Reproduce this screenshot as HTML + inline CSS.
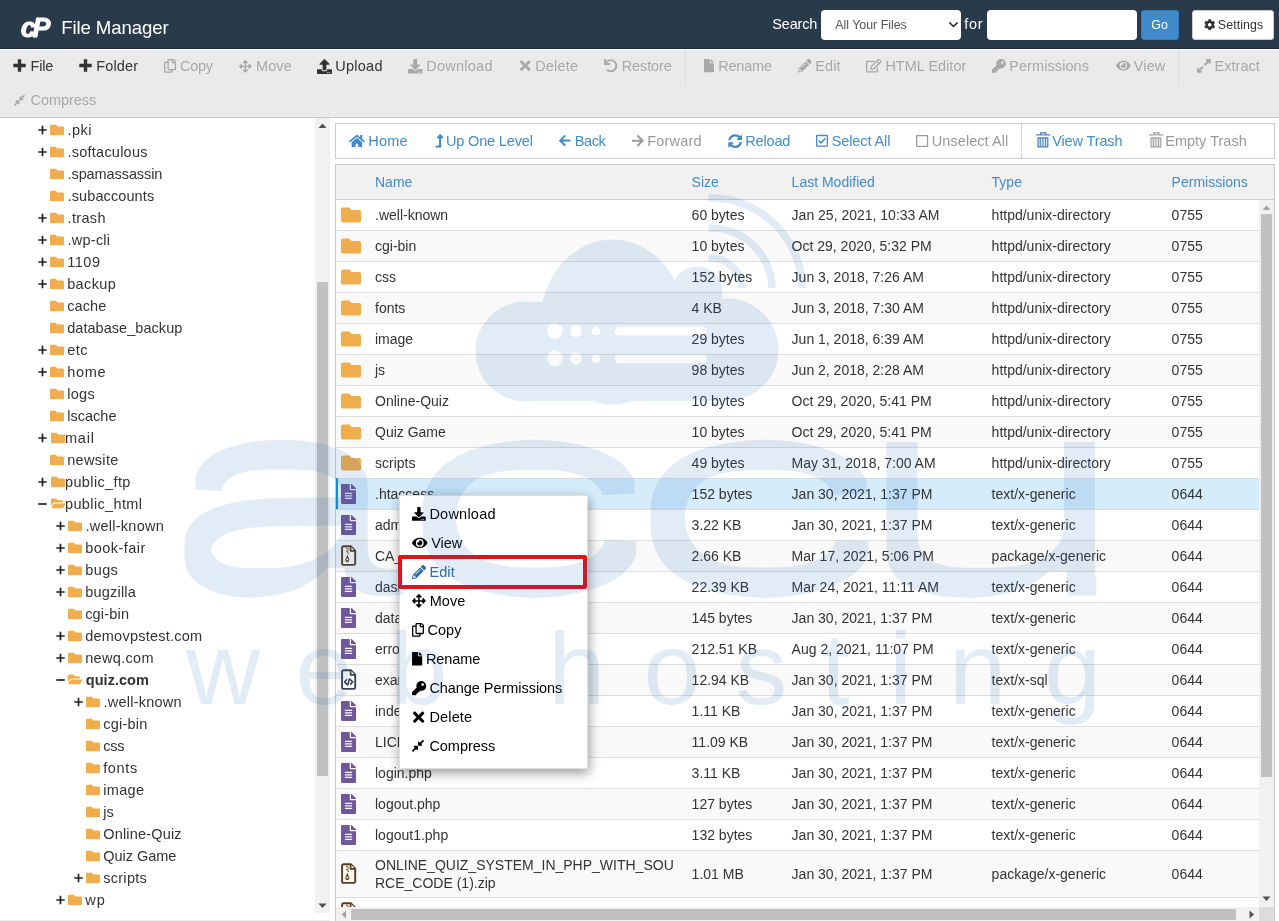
<!DOCTYPE html>
<html lang="en"><head><meta charset="utf-8"><title>cPanel File Manager</title>
<style>html,body{margin:0;padding:0}body{width:1279px;height:921px;position:relative;overflow:hidden;background:#fff;will-change:transform;font-family:"Liberation Sans",sans-serif}svg{display:block;overflow:visible}</style></head>
<body>
<div style="position:absolute;left:0px;top:0px;width:1279px;height:48px;background:#293a4a"></div>
<div style="position:absolute;left:0px;top:48px;width:1279px;height:1px;background:#212d39"></div>
<svg style="position:absolute;left:14px;top:8px" width="46" height="36" viewBox="0 0 46 36"><text x="6.8" y="28.6" font-family="Liberation Sans, sans-serif" font-weight="700" font-style="italic" font-size="27" fill="#fff" stroke="#fff" stroke-width="0.9" stroke-linejoin="round">c<tspan dx="-3.4">P</tspan></text></svg>
<span style="position:absolute;left:61.20px;top:14.56px;font:18.6px/26px 'Liberation Sans', sans-serif;color:#fff;letter-spacing:-0.101px;white-space:nowrap;">File Manager</span>
<span style="position:absolute;left:772.20px;top:13.98px;font:14.5px/20px 'Liberation Sans', sans-serif;color:#fff;letter-spacing:-0.142px;white-space:nowrap;">Search</span>
<div style="position:absolute;left:821px;top:10px;width:140px;height:30px;background:#fff;border-radius:4px"></div>
<span style="position:absolute;left:835.20px;top:15.20px;font:12.4px/20px 'Liberation Sans', sans-serif;color:#555;letter-spacing:-0.003px;white-space:nowrap;">All Your Files</span>
<svg style="position:absolute;left:947.5px;top:21px" width="11" height="8" viewBox="0 0 11 8"><path d="M1.8 1.9 L5.5 5.5 L9.2 1.9" fill="none" stroke="#333" stroke-width="1.7" stroke-linecap="round" stroke-linejoin="round"/></svg>
<span style="position:absolute;left:964.20px;top:13.98px;font:14.5px/20px 'Liberation Sans', sans-serif;color:#fff;letter-spacing:0.726px;white-space:nowrap;">for</span>
<div style="position:absolute;left:987px;top:10px;width:150px;height:30px;background:#fff;border-radius:4px"></div>
<div style="position:absolute;left:1141px;top:10px;width:38px;height:30px;background:#428bca;border-radius:3px;box-sizing:border-box;border:1px solid #357ebd"></div>
<span style="position:absolute;left:1151.20px;top:15.20px;font:12.4px/20px 'Liberation Sans', sans-serif;color:#fff;letter-spacing:0.284px;white-space:nowrap;">Go</span>
<div style="position:absolute;left:1192px;top:10px;width:82px;height:30px;background:#fff;border-radius:3px;box-sizing:border-box;border:1px solid #ccc"></div>
<svg style="position:absolute;left:1204.00px;top:19.30px" width="11.40" height="11.40" viewBox="0 0 512 512"><path d="M487.400 315.700l-42.600-24.600c4.300-23.200 4.300-47 0-70.200l42.600-24.600c4.900-2.800 7.100-8.600 5.500-14-11.100-35.600-30-67.800-54.700-94.600-3.800-4.100-10-5.100-14.800-2.300L380.800 110c-17.900-15.400-38.500-27.300-60.800-35.100V25.800c0-5.600-3.900-10.500-9.400-11.700-36.700-8.200-74.300-7.800-109.200 0-5.500 1.200-9.400 6.100-9.400 11.700V75c-22.200 7.900-42.800 19.800-60.800 35.100L88.700 85.500c-4.900-2.800-11-1.900-14.800 2.300-24.700 26.700-43.600 58.900-54.700 94.600-1.700 5.400.6 11.200 5.500 14L67.300 221c-4.300 23.200-4.300 47 0 70.200l-42.600 24.600c-4.900 2.800-7.100 8.600-5.500 14 11.100 35.600 30 67.800 54.700 94.600 3.800 4.100 10 5.100 14.800 2.300l42.600-24.600c17.900 15.400 38.500 27.300 60.800 35.100v49.200c0 5.600 3.900 10.500 9.400 11.700 36.700 8.200 74.300 7.800 109.200 0 5.500-1.200 9.400-6.100 9.400-11.700v-49.200c22.200-7.900 42.800-19.800 60.800-35.100l42.600 24.600c4.900 2.800 11 1.900 14.800-2.300 24.700-26.700 43.600-58.900 54.700-94.600 1.500-5.500-.7-11.300-5.600-14.100zM256 336c-44.100 0-80-35.900-80-80s35.900-80 80-80 80 35.900 80 80-35.900 80-80 80z" fill="#333"/></svg>
<span style="position:absolute;left:1217.80px;top:15.20px;font:12.4px/20px 'Liberation Sans', sans-serif;color:#333;letter-spacing:0.090px;white-space:nowrap;">Settings</span>
<div style="position:absolute;left:0px;top:49px;width:1279px;height:68px;background:#eaeaea"></div>
<div style="position:absolute;left:0px;top:49px;width:1279px;height:1px;background:#f4f7fb"></div>
<div style="position:absolute;left:0px;top:50px;width:1279px;height:1px;background:#edeff2"></div>
<div style="position:absolute;left:0px;top:117px;width:1279px;height:1px;background:#c9c9c9"></div>
<div style="position:absolute;left:685px;top:50px;width:1px;height:34px;background:#dcdcdc"></div>
<div style="position:absolute;left:1178px;top:50px;width:1px;height:34px;background:#dcdcdc"></div>
<svg style="position:absolute;left:13px;top:59px" width="13" height="13" viewBox="0 0 13 13"><path d="M4.8 0.3h3.4v4.500h4.500v3.400h-4.500v4.500h-3.400v-4.500h-4.500v-3.400h4.500z" fill="#333"/></svg>
<span style="position:absolute;left:30.45px;top:55.98px;font:14.5px/20px 'Liberation Sans', sans-serif;color:#333;letter-spacing:-0.131px;white-space:nowrap;">File</span>
<svg style="position:absolute;left:79px;top:59px" width="13" height="13" viewBox="0 0 13 13"><path d="M4.8 0.3h3.4v4.500h4.500v3.400h-4.500v4.500h-3.400v-4.500h-4.500v-3.400h4.500z" fill="#333"/></svg>
<span style="position:absolute;left:96.20px;top:55.98px;font:14.5px/20px 'Liberation Sans', sans-serif;color:#333;letter-spacing:0.165px;white-space:nowrap;">Folder</span>
<svg style="position:absolute;left:163.80px;top:59.09px" width="12.10" height="13.83" viewBox="0 0 448 512"><path d="M433.941 65.941l-51.882-51.882A48 48 0 0 0 348.118 0H176c-26.510 0-48 21.490-48 48v48H48c-26.510 0-48 21.490-48 48v320c0 26.510 21.490 48 48 48h224c26.510 0 48-21.490 48-48v-48h80c26.510 0 48-21.490 48-48V99.882a48 48 0 0 0-14.059-33.941zM266 464H54a6 6 0 0 1-6-6V150a6 6 0 0 1 6-6h74v224c0 26.510 21.490 48 48 48h96v42a6 6 0 0 1-6 6zm128-96H182a6 6 0 0 1-6-6V54a6 6 0 0 1 6-6h106v88c0 13.255 10.745 24 24 24h88v202a6 6 0 0 1-6 6zm6-256h-64V48h9.632c1.591 0 3.117.632 4.243 1.757l48.368 48.368a6 6 0 0 1 1.757 4.243V112z" fill="#a8a8a8"/></svg>
<span style="position:absolute;left:180.00px;top:55.98px;font:14.5px/20px 'Liberation Sans', sans-serif;color:#a8a8a8;letter-spacing:-0.265px;white-space:nowrap;">Copy</span>
<svg style="position:absolute;left:239.00px;top:59.65px" width="12.70" height="12.70" viewBox="0 0 512 512"><path d="M352.201 425.775l-79.196 79.196c-9.373 9.373-24.568 9.373-33.941 0l-79.196-79.196c-15.119-15.119-4.411-40.971 16.971-40.970h51.162L228 284H127.196v51.162c0 21.382-25.851 32.090-40.971 16.971L7.029 272.937c-9.373-9.373-9.373-24.569 0-33.941L86.225 159.800c15.119-15.119 40.971-4.411 40.971 16.971V228H228V127.196h-51.230c-21.382 0-32.090-25.851-16.971-40.971l79.196-79.196c9.373-9.373 24.568-9.373 33.941 0l79.196 79.196c15.119 15.119 4.411 40.971-16.971 40.971h-51.162V228h100.804v-51.162c0-21.382 25.851-32.090 40.970-16.971l79.196 79.196c9.373 9.373 9.373 24.569 0 33.941L425.773 352.200c-15.119 15.119-40.971 4.411-40.970-16.971V284H284v100.804h51.230c21.382 0 32.090 25.851 16.971 40.971z" fill="#a8a8a8"/></svg>
<span style="position:absolute;left:256.00px;top:55.98px;font:14.5px/20px 'Liberation Sans', sans-serif;color:#a8a8a8;letter-spacing:0.083px;white-space:nowrap;">Move</span>
<svg style="position:absolute;left:317.00px;top:58.50px" width="15.00" height="15.00" viewBox="0 0 512 512"><path d="M296 384h-80c-13.300 0-24-10.700-24-24V192h-87.700c-17.800 0-26.700-21.500-14.100-34.100L242.300 5.700c7.500-7.500 19.800-7.500 27.300 0l152.200 152.200c12.600 12.600 3.700 34.100-14.100 34.100H320v168c0 13.300-10.700 24-24 24zm216-8v112c0 13.300-10.700 24-24 24H24c-13.300 0-24-10.700-24-24V376c0-13.300 10.700-24 24-24h136v8c0 30.900 25.100 56 56 56h80c30.900 0 56-25.100 56-56v-8h136c13.300 0 24 10.700 24 24zm-124 88c0-11-9-20-20-20s-20 9-20 20 9 20 20 20 20-9 20-20zm64 0c0-11-9-20-20-20s-20 9-20 20 9 20 20 20 20-9 20-20z" fill="#333"/></svg>
<span style="position:absolute;left:335.20px;top:55.98px;font:14.5px/20px 'Liberation Sans', sans-serif;color:#333;letter-spacing:0.274px;white-space:nowrap;">Upload</span>
<svg style="position:absolute;left:408.00px;top:58.75px" width="14.50" height="14.50" viewBox="0 0 512 512"><path d="M216 0h80c13.300 0 24 10.700 24 24v168h87.700c17.800 0 26.700 21.500 14.100 34.100L269.700 378.300c-7.500 7.500-19.800 7.500-27.300 0L90.100 226.100c-12.600-12.600-3.700-34.100 14.100-34.100H192V24c0-13.300 10.700-24 24-24zm296 376v112c0 13.300-10.700 24-24 24H24c-13.300 0-24-10.700-24-24V376c0-13.300 10.700-24 24-24h146.700l49 49c20.100 20.100 52.500 20.100 72.600 0l49-49H488c13.300 0 24 10.700 24 24zm-124 88c0-11-9-20-20-20s-20 9-20 20 9 20 20 20 20-9 20-20zm64 0c0-11-9-20-20-20s-20 9-20 20 9 20 20 20 20-9 20-20z" fill="#a8a8a8"/></svg>
<span style="position:absolute;left:426.20px;top:55.98px;font:14.5px/20px 'Liberation Sans', sans-serif;color:#a8a8a8;letter-spacing:0.262px;white-space:nowrap;">Download</span>
<svg style="position:absolute;left:520.00px;top:58.36px" width="10.50" height="15.27" viewBox="0 0 352 512"><path d="M242.72 256l100.070-100.070c12.280-12.280 12.280-32.190 0-44.480l-22.240-22.240c-12.280-12.280-32.190-12.280-44.480 0L176 189.280 75.930 89.210c-12.280-12.280-32.190-12.280-44.480 0L9.210 111.450c-12.280 12.280-12.280 32.190 0 44.480L109.280 256 9.210 356.070c-12.280 12.280-12.280 32.190 0 44.480l22.240 22.240c12.280 12.280 32.200 12.280 44.480 0L176 322.720l100.070 100.070c12.280 12.280 32.200 12.280 44.480 0l22.240-22.240c12.280-12.280 12.280-32.190 0-44.480L242.720 256z" fill="#a8a8a8"/></svg>
<span style="position:absolute;left:535.20px;top:55.98px;font:14.5px/20px 'Liberation Sans', sans-serif;color:#a8a8a8;letter-spacing:0.196px;white-space:nowrap;">Delete</span>
<svg style="position:absolute;left:604.00px;top:59.25px" width="13.50" height="13.50" viewBox="0 0 512 512"><path d="M212.333 224.333H12c-6.627 0-12-5.373-12-12V12C0 5.373 5.373 0 12 0h48c6.627 0 12 5.373 12 12v78.112C117.773 39.279 184.260 7.470 258.175 8.007c136.906.994 246.448 111.623 246.157 248.532C504.041 393.258 393.120 504 256.333 504c-64.089 0-122.496-24.313-166.510-64.215-5.099-4.622-5.334-12.554-.467-17.420l33.967-33.967c4.474-4.474 11.662-4.717 16.401-.525C170.760 415.336 211.580 432 256.333 432c97.268 0 176-78.716 176-176 0-97.267-78.716-176-176-176-58.496 0-110.280 28.476-142.274 72.333h98.274c6.627 0 12 5.373 12 12v48c0 6.627-5.373 12-12 12z" fill="#a8a8a8"/></svg>
<span style="position:absolute;left:621.70px;top:55.98px;font:14.5px/20px 'Liberation Sans', sans-serif;color:#a8a8a8;letter-spacing:-0.097px;white-space:nowrap;">Restore</span>
<svg style="position:absolute;left:704.00px;top:59.33px" width="10.00" height="13.33" viewBox="0 0 384 512"><path d="M224 136V0H24C10.700 0 0 10.700 0 24v464c0 13.300 10.700 24 24 24h336c13.300 0 24-10.700 24-24V160H248c-13.200 0-24-10.800-24-24zm160-14.100v6.100H256V0h6.100c6.400 0 12.500 2.500 17 7l97.900 98c4.500 4.500 7 10.600 7 16.900z" fill="#a8a8a8"/></svg>
<span style="position:absolute;left:718.20px;top:55.98px;font:14.5px/20px 'Liberation Sans', sans-serif;color:#a8a8a8;letter-spacing:-0.202px;white-space:nowrap;">Rename</span>
<svg style="position:absolute;left:797.50px;top:59.25px" width="13.50" height="13.50" viewBox="0 0 512 512"><path d="M497.900 142.100l-46.100 46.100c-4.700 4.700-12.300 4.700-17 0l-111-111c-4.700-4.700-4.700-12.300 0-17l46.100-46.100c18.700-18.700 49.100-18.700 67.900 0l60.100 60.100c18.800 18.700 18.800 49.100 0 67.900zM284.200 99.800L21.600 362.400.4 483.900c-2.900 16.400 11.400 30.600 27.800 27.800l121.500-21.300 262.600-262.600c4.700-4.700 4.700-12.300 0-17l-111-111c-4.800-4.700-12.400-4.700-17.100 0zM124.100 339.900c-5.500-5.500-5.500-14.300 0-19.800l154-154c5.500-5.500 14.300-5.500 19.800 0s5.500 14.300 0 19.800l-154 154c-5.500 5.500-14.300 5.500-19.800 0zM88 424h48v36.300l-64.500 11.300-31.100-31.100L51.700 376H88v48z" fill="#a8a8a8"/></svg>
<span style="position:absolute;left:815.20px;top:55.98px;font:14.5px/20px 'Liberation Sans', sans-serif;color:#a8a8a8;letter-spacing:0.150px;white-space:nowrap;">Edit</span>
<svg style="position:absolute;left:866.00px;top:59.20px" width="15.30" height="13.60" viewBox="0 0 576 512"><path d="M402.300 344.900l32-32c5-5 13.700-1.500 13.700 5.700V464c0 26.500-21.500 48-48 48H48c-26.500 0-48-21.500-48-48V112c0-26.500 21.500-48 48-48h273.500c7.100 0 10.700 8.600 5.700 13.700l-32 32c-1.500 1.500-3.500 2.300-5.700 2.300H48v352h352V350.500c0-2.100.8-4.100 2.300-5.600zm156.600-201.800L296.300 405.700l-90.400 10c-26.200 2.900-48.500-19.200-45.600-45.600l10-90.400L432.900 17.100c22.900-22.900 59.900-22.900 82.700 0l43.200 43.200c22.900 22.900 22.900 60 .1 82.800zM460.100 174L402 115.900 216.200 301.800l-7.300 65.300 65.300-7.300L460.100 174zm64.800-79.700l-43.200-43.200c-4.100-4.100-10.800-4.100-14.800 0L436 82l58.100 58.100 30.900-30.900c4-4.200 4-10.800-.1-14.900z" fill="#a8a8a8"/></svg>
<span style="position:absolute;left:885.40px;top:55.98px;font:14.5px/20px 'Liberation Sans', sans-serif;color:#a8a8a8;letter-spacing:0.005px;white-space:nowrap;">HTML Editor</span>
<svg style="position:absolute;left:992.00px;top:59.10px" width="13.80" height="13.80" viewBox="0 0 512 512"><path d="M512 176.001C512 273.203 433.202 352 336 352c-11.220 0-22.190-1.062-32.827-3.069l-24.012 27.014A23.999 23.999 0 0 1 261.223 384H224v40c0 13.255-10.745 24-24 24h-40v40c0 13.255-10.745 24-24 24H24c-13.255 0-24-10.745-24-24v-78.059c0-6.365 2.529-12.470 7.029-16.971l161.802-161.802C163.108 213.814 160 195.271 160 176 160 78.798 238.797.001 335.999 0 433.488-.001 512 78.511 512 176.001zM336 128c0 26.510 21.490 48 48 48s48-21.490 48-48-21.490-48-48-48-48 21.490-48 48z" fill="#a8a8a8"/></svg>
<span style="position:absolute;left:1009.20px;top:55.98px;font:14.5px/20px 'Liberation Sans', sans-serif;color:#a8a8a8;letter-spacing:0.085px;white-space:nowrap;">Permissions</span>
<svg style="position:absolute;left:1115.50px;top:59.42px" width="14.80" height="13.16" viewBox="0 0 576 512"><path d="M572.520 241.400C518.290 135.590 410.930 64 288 64S57.680 135.640 3.480 241.410a32.350 32.350 0 0 0 0 29.190C57.710 376.410 165.070 448 288 448s230.320-71.640 284.520-177.410a32.350 32.350 0 0 0 0-29.190zM288 400a144 144 0 1 1 144-144 143.930 143.930 0 0 1-144 144zm0-240a95.310 95.310 0 0 0-25.310 3.790 47.850 47.850 0 0 1-66.900 66.900A95.780 95.780 0 1 0 288 160z" fill="#a8a8a8"/></svg>
<span style="position:absolute;left:1133.70px;top:55.98px;font:14.5px/20px 'Liberation Sans', sans-serif;color:#a8a8a8;letter-spacing:0.157px;white-space:nowrap;">View</span>
<svg style="position:absolute;left:1196.80px;top:58.17px" width="13.70" height="15.66" viewBox="0 0 448 512"><path d="M212.686 315.314L120 408l32.922 31.029c15.120 15.120 4.412 40.971-16.970 40.971h-112C10.697 480 0 469.255 0 456V344c0-21.382 25.803-32.090 40.922-16.971L72 360l92.686-92.686c6.248-6.248 16.379-6.248 22.627 0l25.373 25.373c6.249 6.248 6.249 16.378 0 22.627zm22.628-118.628L328 104l-32.922-31.029C279.958 57.851 290.666 32 312.048 32h112C437.303 32 448 42.745 448 56v112c0 21.382-25.803 32.090-40.922 16.971L376 152l-92.686 92.686c-6.248 6.248-16.379 6.248-22.627 0l-25.373-25.373c-6.249-6.248-6.249-16.378 0-22.627z" fill="#a8a8a8"/></svg>
<span style="position:absolute;left:1214.60px;top:55.98px;font:14.5px/20px 'Liberation Sans', sans-serif;color:#a8a8a8;letter-spacing:0.011px;white-space:nowrap;">Extract</span>
<svg style="position:absolute;left:13.50px;top:93.71px" width="11.00" height="12.57" viewBox="0 0 448 512"><path d="M4.686 427.314L104 328l-32.922-31.029C55.958 281.851 66.666 256 88.048 256h112C213.303 256 224 266.745 224 280v112c0 21.382-25.803 32.090-40.922 16.971L152 376l-99.314 99.314c-6.248 6.248-16.379 6.248-22.627 0L4.686 449.941c-6.248-6.248-6.248-16.379 0-22.627zM443.314 84.686L344 184l32.922 31.029c15.120 15.120 4.412 40.971-16.970 40.971h-112C234.697 256 224 245.255 224 232V120c0-21.382 25.803-32.090 40.922-16.971L296 136l99.314-99.314c6.248-6.248 16.379-6.248 22.627 0l25.373 25.373c6.248 6.248 6.248 16.379 0 22.627z" fill="#a8a8a8"/></svg>
<span style="position:absolute;left:30.45px;top:89.98px;font:14.5px/20px 'Liberation Sans', sans-serif;color:#a8a8a8;letter-spacing:-0.029px;white-space:nowrap;">Compress</span>
<div style="position:absolute;left:315px;top:118px;width:15px;height:795px;background:#f1f1f1"></div>
<div style="position:absolute;left:317px;top:282px;width:11px;height:494px;background:#c1c1c1"></div>
<svg style="position:absolute;left:315px;top:118px" width="15" height="15" viewBox="0 0 15 15"><path d="M3.5 10 L7.5 5.5 L11.5 10z" fill="#505050"/></svg>
<svg style="position:absolute;left:315px;top:898px" width="15" height="15" viewBox="0 0 15 15"><path d="M3.5 5.5 L7.5 10 L11.5 5.5z" fill="#505050"/></svg>
<svg style="position:absolute;left:38px;top:125px" width="9" height="10" viewBox="0 0 9 10"><path d="M0.3 5h8.4M4.5 0.8v8.4" stroke="#222" stroke-width="1.7" fill="none"/></svg>
<svg style="position:absolute;left:50.00px;top:122.70px" width="14.00" height="14.00" viewBox="0 0 512 512"><path d="M464 128H272l-64-64H48C21.490 64 0 85.490 0 112v288c0 26.510 21.490 48 48 48h416c26.510 0 48-21.490 48-48V176c0-26.510-21.490-48-48-48z" fill="#f0ad4e"/></svg>
<span style="position:absolute;left:67.55px;top:118.98px;font:14.5px/22px 'Liberation Sans', sans-serif;color:#333;letter-spacing:0.468px;white-space:nowrap;">.pki</span>
<svg style="position:absolute;left:38px;top:147px" width="9" height="10" viewBox="0 0 9 10"><path d="M0.3 5h8.4M4.5 0.8v8.4" stroke="#222" stroke-width="1.7" fill="none"/></svg>
<svg style="position:absolute;left:50.00px;top:144.70px" width="14.00" height="14.00" viewBox="0 0 512 512"><path d="M464 128H272l-64-64H48C21.490 64 0 85.490 0 112v288c0 26.510 21.490 48 48 48h416c26.510 0 48-21.490 48-48V176c0-26.510-21.490-48-48-48z" fill="#f0ad4e"/></svg>
<span style="position:absolute;left:67.55px;top:140.98px;font:14.5px/22px 'Liberation Sans', sans-serif;color:#333;letter-spacing:0.230px;white-space:nowrap;">.softaculous</span>
<svg style="position:absolute;left:50.00px;top:166.70px" width="14.00" height="14.00" viewBox="0 0 512 512"><path d="M464 128H272l-64-64H48C21.490 64 0 85.490 0 112v288c0 26.510 21.490 48 48 48h416c26.510 0 48-21.490 48-48V176c0-26.510-21.490-48-48-48z" fill="#f0ad4e"/></svg>
<span style="position:absolute;left:67.55px;top:162.98px;font:14.5px/22px 'Liberation Sans', sans-serif;color:#333;letter-spacing:-0.089px;white-space:nowrap;">.spamassassin</span>
<svg style="position:absolute;left:50.00px;top:188.70px" width="14.00" height="14.00" viewBox="0 0 512 512"><path d="M464 128H272l-64-64H48C21.490 64 0 85.490 0 112v288c0 26.510 21.490 48 48 48h416c26.510 0 48-21.490 48-48V176c0-26.510-21.490-48-48-48z" fill="#f0ad4e"/></svg>
<span style="position:absolute;left:67.55px;top:184.98px;font:14.5px/22px 'Liberation Sans', sans-serif;color:#333;letter-spacing:0.108px;white-space:nowrap;">.subaccounts</span>
<svg style="position:absolute;left:38px;top:213px" width="9" height="10" viewBox="0 0 9 10"><path d="M0.3 5h8.4M4.5 0.8v8.4" stroke="#222" stroke-width="1.7" fill="none"/></svg>
<svg style="position:absolute;left:50.00px;top:210.70px" width="14.00" height="14.00" viewBox="0 0 512 512"><path d="M464 128H272l-64-64H48C21.490 64 0 85.490 0 112v288c0 26.510 21.490 48 48 48h416c26.510 0 48-21.490 48-48V176c0-26.510-21.490-48-48-48z" fill="#f0ad4e"/></svg>
<span style="position:absolute;left:67.55px;top:206.98px;font:14.5px/22px 'Liberation Sans', sans-serif;color:#333;letter-spacing:0.331px;white-space:nowrap;">.trash</span>
<svg style="position:absolute;left:38px;top:235px" width="9" height="10" viewBox="0 0 9 10"><path d="M0.3 5h8.4M4.5 0.8v8.4" stroke="#222" stroke-width="1.7" fill="none"/></svg>
<svg style="position:absolute;left:50.00px;top:232.70px" width="14.00" height="14.00" viewBox="0 0 512 512"><path d="M464 128H272l-64-64H48C21.490 64 0 85.490 0 112v288c0 26.510 21.490 48 48 48h416c26.510 0 48-21.490 48-48V176c0-26.510-21.490-48-48-48z" fill="#f0ad4e"/></svg>
<span style="position:absolute;left:67.55px;top:228.98px;font:14.5px/22px 'Liberation Sans', sans-serif;color:#333;letter-spacing:0.237px;white-space:nowrap;">.wp-cli</span>
<svg style="position:absolute;left:38px;top:257px" width="9" height="10" viewBox="0 0 9 10"><path d="M0.3 5h8.4M4.5 0.8v8.4" stroke="#222" stroke-width="1.7" fill="none"/></svg>
<svg style="position:absolute;left:50.00px;top:254.70px" width="14.00" height="14.00" viewBox="0 0 512 512"><path d="M464 128H272l-64-64H48C21.490 64 0 85.490 0 112v288c0 26.510 21.490 48 48 48h416c26.510 0 48-21.490 48-48V176c0-26.510-21.490-48-48-48z" fill="#f0ad4e"/></svg>
<span style="position:absolute;left:67.20px;top:250.98px;font:14.5px/22px 'Liberation Sans', sans-serif;color:#333;letter-spacing:0.528px;white-space:nowrap;">1109</span>
<svg style="position:absolute;left:38px;top:279px" width="9" height="10" viewBox="0 0 9 10"><path d="M0.3 5h8.4M4.5 0.8v8.4" stroke="#222" stroke-width="1.7" fill="none"/></svg>
<svg style="position:absolute;left:50.00px;top:276.70px" width="14.00" height="14.00" viewBox="0 0 512 512"><path d="M464 128H272l-64-64H48C21.490 64 0 85.490 0 112v288c0 26.510 21.490 48 48 48h416c26.510 0 48-21.490 48-48V176c0-26.510-21.490-48-48-48z" fill="#f0ad4e"/></svg>
<span style="position:absolute;left:67.20px;top:272.98px;font:14.5px/22px 'Liberation Sans', sans-serif;color:#333;letter-spacing:0.356px;white-space:nowrap;">backup</span>
<svg style="position:absolute;left:50.00px;top:298.70px" width="14.00" height="14.00" viewBox="0 0 512 512"><path d="M464 128H272l-64-64H48C21.490 64 0 85.490 0 112v288c0 26.510 21.490 48 48 48h416c26.510 0 48-21.490 48-48V176c0-26.510-21.490-48-48-48z" fill="#f0ad4e"/></svg>
<span style="position:absolute;left:67.20px;top:294.98px;font:14.5px/22px 'Liberation Sans', sans-serif;color:#333;letter-spacing:0.079px;white-space:nowrap;">cache</span>
<svg style="position:absolute;left:50.00px;top:320.70px" width="14.00" height="14.00" viewBox="0 0 512 512"><path d="M464 128H272l-64-64H48C21.490 64 0 85.490 0 112v288c0 26.510 21.490 48 48 48h416c26.510 0 48-21.490 48-48V176c0-26.510-21.490-48-48-48z" fill="#f0ad4e"/></svg>
<span style="position:absolute;left:67.20px;top:316.98px;font:14.5px/22px 'Liberation Sans', sans-serif;color:#333;letter-spacing:0.047px;white-space:nowrap;">database_backup</span>
<svg style="position:absolute;left:38px;top:345px" width="9" height="10" viewBox="0 0 9 10"><path d="M0.3 5h8.4M4.5 0.8v8.4" stroke="#222" stroke-width="1.7" fill="none"/></svg>
<svg style="position:absolute;left:50.00px;top:342.70px" width="14.00" height="14.00" viewBox="0 0 512 512"><path d="M464 128H272l-64-64H48C21.490 64 0 85.490 0 112v288c0 26.510 21.490 48 48 48h416c26.510 0 48-21.490 48-48V176c0-26.510-21.490-48-48-48z" fill="#f0ad4e"/></svg>
<span style="position:absolute;left:67.20px;top:338.98px;font:14.5px/22px 'Liberation Sans', sans-serif;color:#333;letter-spacing:0.485px;white-space:nowrap;">etc</span>
<svg style="position:absolute;left:38px;top:367px" width="9" height="10" viewBox="0 0 9 10"><path d="M0.3 5h8.4M4.5 0.8v8.4" stroke="#222" stroke-width="1.7" fill="none"/></svg>
<svg style="position:absolute;left:50.00px;top:364.70px" width="14.00" height="14.00" viewBox="0 0 512 512"><path d="M464 128H272l-64-64H48C21.490 64 0 85.490 0 112v288c0 26.510 21.490 48 48 48h416c26.510 0 48-21.490 48-48V176c0-26.510-21.490-48-48-48z" fill="#f0ad4e"/></svg>
<span style="position:absolute;left:67.20px;top:360.98px;font:14.5px/22px 'Liberation Sans', sans-serif;color:#333;letter-spacing:0.705px;white-space:nowrap;">home</span>
<svg style="position:absolute;left:50.00px;top:386.70px" width="14.00" height="14.00" viewBox="0 0 512 512"><path d="M464 128H272l-64-64H48C21.490 64 0 85.490 0 112v288c0 26.510 21.490 48 48 48h416c26.510 0 48-21.490 48-48V176c0-26.510-21.490-48-48-48z" fill="#f0ad4e"/></svg>
<span style="position:absolute;left:67.20px;top:382.98px;font:14.5px/22px 'Liberation Sans', sans-serif;color:#333;letter-spacing:0.323px;white-space:nowrap;">logs</span>
<svg style="position:absolute;left:50.00px;top:408.70px" width="14.00" height="14.00" viewBox="0 0 512 512"><path d="M464 128H272l-64-64H48C21.490 64 0 85.490 0 112v288c0 26.510 21.490 48 48 48h416c26.510 0 48-21.490 48-48V176c0-26.510-21.490-48-48-48z" fill="#f0ad4e"/></svg>
<span style="position:absolute;left:67.20px;top:404.98px;font:14.5px/22px 'Liberation Sans', sans-serif;color:#333;letter-spacing:0.018px;white-space:nowrap;">lscache</span>
<svg style="position:absolute;left:38px;top:433px" width="9" height="10" viewBox="0 0 9 10"><path d="M0.3 5h8.4M4.5 0.8v8.4" stroke="#222" stroke-width="1.7" fill="none"/></svg>
<svg style="position:absolute;left:51.00px;top:430.70px" width="14.00" height="14.00" viewBox="0 0 512 512"><path d="M464 128H272l-64-64H48C21.490 64 0 85.490 0 112v288c0 26.510 21.490 48 48 48h416c26.510 0 48-21.490 48-48V176c0-26.510-21.490-48-48-48z" fill="#f0ad4e"/></svg>
<span style="position:absolute;left:65.00px;top:426.98px;font:14.5px/22px 'Liberation Sans', sans-serif;color:#333;letter-spacing:0.777px;white-space:nowrap;">mail</span>
<svg style="position:absolute;left:50.00px;top:452.70px" width="14.00" height="14.00" viewBox="0 0 512 512"><path d="M464 128H272l-64-64H48C21.490 64 0 85.490 0 112v288c0 26.510 21.490 48 48 48h416c26.510 0 48-21.490 48-48V176c0-26.510-21.490-48-48-48z" fill="#f0ad4e"/></svg>
<span style="position:absolute;left:67.20px;top:448.98px;font:14.5px/22px 'Liberation Sans', sans-serif;color:#333;letter-spacing:0.333px;white-space:nowrap;">newsite</span>
<svg style="position:absolute;left:38px;top:477px" width="9" height="10" viewBox="0 0 9 10"><path d="M0.3 5h8.4M4.5 0.8v8.4" stroke="#222" stroke-width="1.7" fill="none"/></svg>
<svg style="position:absolute;left:51.00px;top:474.70px" width="14.00" height="14.00" viewBox="0 0 512 512"><path d="M464 128H272l-64-64H48C21.490 64 0 85.490 0 112v288c0 26.510 21.490 48 48 48h416c26.510 0 48-21.490 48-48V176c0-26.510-21.490-48-48-48z" fill="#f0ad4e"/></svg>
<span style="position:absolute;left:65.00px;top:470.98px;font:14.5px/22px 'Liberation Sans', sans-serif;color:#333;letter-spacing:0.372px;white-space:nowrap;">public_ftp</span>
<svg style="position:absolute;left:38px;top:499px" width="9" height="10" viewBox="0 0 9 10"><path d="M0.3 5h8.4" stroke="#222" stroke-width="1.7" fill="none"/></svg>
<svg style="position:absolute;left:50.50px;top:497.20px" width="14.40" height="12.80" viewBox="0 0 576 512"><path d="M572.694 292.093L500.270 416.248A63.997 63.997 0 0 1 444.989 448H45.025c-18.523 0-30.064-20.093-20.731-36.093l72.424-124.155A64 64 0 0 1 152 256h399.964c18.523 0 30.064 20.093 20.730 36.093zM152 224h328v-48c0-26.510-21.490-48-48-48H272l-64-64H48C21.490 64 0 85.490 0 112v278.046l69.077-118.418C86.214 242.250 117.989 224 152 224z" fill="#f0ad4e"/></svg>
<span style="position:absolute;left:65.00px;top:492.98px;font:14.5px/22px 'Liberation Sans', sans-serif;color:#333;letter-spacing:0.369px;white-space:nowrap;">public_html</span>
<svg style="position:absolute;left:56px;top:521px" width="9" height="10" viewBox="0 0 9 10"><path d="M0.3 5h8.4M4.5 0.8v8.4" stroke="#222" stroke-width="1.7" fill="none"/></svg>
<svg style="position:absolute;left:68.00px;top:518.70px" width="14.00" height="14.00" viewBox="0 0 512 512"><path d="M464 128H272l-64-64H48C21.490 64 0 85.490 0 112v288c0 26.510 21.490 48 48 48h416c26.510 0 48-21.490 48-48V176c0-26.510-21.490-48-48-48z" fill="#f0ad4e"/></svg>
<span style="position:absolute;left:85.55px;top:514.98px;font:14.5px/22px 'Liberation Sans', sans-serif;color:#333;letter-spacing:0.245px;white-space:nowrap;">.well-known</span>
<svg style="position:absolute;left:56px;top:543px" width="9" height="10" viewBox="0 0 9 10"><path d="M0.3 5h8.4M4.5 0.8v8.4" stroke="#222" stroke-width="1.7" fill="none"/></svg>
<svg style="position:absolute;left:68.00px;top:540.70px" width="14.00" height="14.00" viewBox="0 0 512 512"><path d="M464 128H272l-64-64H48C21.490 64 0 85.490 0 112v288c0 26.510 21.490 48 48 48h416c26.510 0 48-21.490 48-48V176c0-26.510-21.490-48-48-48z" fill="#f0ad4e"/></svg>
<span style="position:absolute;left:85.20px;top:536.98px;font:14.5px/22px 'Liberation Sans', sans-serif;color:#333;letter-spacing:0.453px;white-space:nowrap;">book-fair</span>
<svg style="position:absolute;left:56px;top:565px" width="9" height="10" viewBox="0 0 9 10"><path d="M0.3 5h8.4M4.5 0.8v8.4" stroke="#222" stroke-width="1.7" fill="none"/></svg>
<svg style="position:absolute;left:68.00px;top:562.70px" width="14.00" height="14.00" viewBox="0 0 512 512"><path d="M464 128H272l-64-64H48C21.490 64 0 85.490 0 112v288c0 26.510 21.490 48 48 48h416c26.510 0 48-21.490 48-48V176c0-26.510-21.490-48-48-48z" fill="#f0ad4e"/></svg>
<span style="position:absolute;left:85.20px;top:558.98px;font:14.5px/22px 'Liberation Sans', sans-serif;color:#333;letter-spacing:0.412px;white-space:nowrap;">bugs</span>
<svg style="position:absolute;left:56px;top:587px" width="9" height="10" viewBox="0 0 9 10"><path d="M0.3 5h8.4M4.5 0.8v8.4" stroke="#222" stroke-width="1.7" fill="none"/></svg>
<svg style="position:absolute;left:68.00px;top:584.70px" width="14.00" height="14.00" viewBox="0 0 512 512"><path d="M464 128H272l-64-64H48C21.490 64 0 85.490 0 112v288c0 26.510 21.490 48 48 48h416c26.510 0 48-21.490 48-48V176c0-26.510-21.490-48-48-48z" fill="#f0ad4e"/></svg>
<span style="position:absolute;left:85.20px;top:580.98px;font:14.5px/22px 'Liberation Sans', sans-serif;color:#333;letter-spacing:0.216px;white-space:nowrap;">bugzilla</span>
<svg style="position:absolute;left:68.00px;top:606.70px" width="14.00" height="14.00" viewBox="0 0 512 512"><path d="M464 128H272l-64-64H48C21.490 64 0 85.490 0 112v288c0 26.510 21.490 48 48 48h416c26.510 0 48-21.490 48-48V176c0-26.510-21.490-48-48-48z" fill="#f0ad4e"/></svg>
<span style="position:absolute;left:85.20px;top:602.98px;font:14.5px/22px 'Liberation Sans', sans-serif;color:#333;letter-spacing:0.183px;white-space:nowrap;">cgi-bin</span>
<svg style="position:absolute;left:56px;top:631px" width="9" height="10" viewBox="0 0 9 10"><path d="M0.3 5h8.4M4.5 0.8v8.4" stroke="#222" stroke-width="1.7" fill="none"/></svg>
<svg style="position:absolute;left:68.00px;top:628.70px" width="14.00" height="14.00" viewBox="0 0 512 512"><path d="M464 128H272l-64-64H48C21.490 64 0 85.490 0 112v288c0 26.510 21.490 48 48 48h416c26.510 0 48-21.490 48-48V176c0-26.510-21.490-48-48-48z" fill="#f0ad4e"/></svg>
<span style="position:absolute;left:85.20px;top:624.98px;font:14.5px/22px 'Liberation Sans', sans-serif;color:#333;letter-spacing:0.237px;white-space:nowrap;">demovpstest.com</span>
<svg style="position:absolute;left:56px;top:653px" width="9" height="10" viewBox="0 0 9 10"><path d="M0.3 5h8.4M4.5 0.8v8.4" stroke="#222" stroke-width="1.7" fill="none"/></svg>
<svg style="position:absolute;left:68.00px;top:650.70px" width="14.00" height="14.00" viewBox="0 0 512 512"><path d="M464 128H272l-64-64H48C21.490 64 0 85.490 0 112v288c0 26.510 21.490 48 48 48h416c26.510 0 48-21.490 48-48V176c0-26.510-21.490-48-48-48z" fill="#f0ad4e"/></svg>
<span style="position:absolute;left:85.20px;top:646.98px;font:14.5px/22px 'Liberation Sans', sans-serif;color:#333;letter-spacing:0.326px;white-space:nowrap;">newq.com</span>
<svg style="position:absolute;left:56px;top:675px" width="9" height="10" viewBox="0 0 9 10"><path d="M0.3 5h8.4" stroke="#222" stroke-width="1.7" fill="none"/></svg>
<svg style="position:absolute;left:67.50px;top:673.20px" width="14.40" height="12.80" viewBox="0 0 576 512"><path d="M572.694 292.093L500.270 416.248A63.997 63.997 0 0 1 444.989 448H45.025c-18.523 0-30.064-20.093-20.731-36.093l72.424-124.155A64 64 0 0 1 152 256h399.964c18.523 0 30.064 20.093 20.730 36.093zM152 224h328v-48c0-26.510-21.490-48-48-48H272l-64-64H48C21.490 64 0 85.490 0 112v278.046l69.077-118.418C86.214 242.250 117.989 224 152 224z" fill="#f0ad4e"/></svg>
<span style="position:absolute;left:85.80px;top:668.98px;font:14.5px/22px 'Liberation Sans', sans-serif;font-weight:700;color:#333;letter-spacing:0.032px;white-space:nowrap;">quiz.com</span>
<svg style="position:absolute;left:74px;top:697px" width="9" height="10" viewBox="0 0 9 10"><path d="M0.3 5h8.4M4.5 0.8v8.4" stroke="#222" stroke-width="1.7" fill="none"/></svg>
<svg style="position:absolute;left:86.00px;top:694.70px" width="14.00" height="14.00" viewBox="0 0 512 512"><path d="M464 128H272l-64-64H48C21.490 64 0 85.490 0 112v288c0 26.510 21.490 48 48 48h416c26.510 0 48-21.490 48-48V176c0-26.510-21.490-48-48-48z" fill="#f0ad4e"/></svg>
<span style="position:absolute;left:103.55px;top:690.98px;font:14.5px/22px 'Liberation Sans', sans-serif;color:#333;letter-spacing:0.227px;white-space:nowrap;">.well-known</span>
<svg style="position:absolute;left:86.00px;top:716.70px" width="14.00" height="14.00" viewBox="0 0 512 512"><path d="M464 128H272l-64-64H48C21.490 64 0 85.490 0 112v288c0 26.510 21.490 48 48 48h416c26.510 0 48-21.490 48-48V176c0-26.510-21.490-48-48-48z" fill="#f0ad4e"/></svg>
<span style="position:absolute;left:103.20px;top:712.98px;font:14.5px/22px 'Liberation Sans', sans-serif;color:#333;letter-spacing:0.226px;white-space:nowrap;">cgi-bin</span>
<svg style="position:absolute;left:86.00px;top:738.70px" width="14.00" height="14.00" viewBox="0 0 512 512"><path d="M464 128H272l-64-64H48C21.490 64 0 85.490 0 112v288c0 26.510 21.490 48 48 48h416c26.510 0 48-21.490 48-48V176c0-26.510-21.490-48-48-48z" fill="#f0ad4e"/></svg>
<span style="position:absolute;left:103.20px;top:734.98px;font:14.5px/22px 'Liberation Sans', sans-serif;color:#333;letter-spacing:-0.250px;white-space:nowrap;">css</span>
<svg style="position:absolute;left:86.00px;top:760.70px" width="14.00" height="14.00" viewBox="0 0 512 512"><path d="M464 128H272l-64-64H48C21.490 64 0 85.490 0 112v288c0 26.510 21.490 48 48 48h416c26.510 0 48-21.490 48-48V176c0-26.510-21.490-48-48-48z" fill="#f0ad4e"/></svg>
<span style="position:absolute;left:103.20px;top:756.98px;font:14.5px/22px 'Liberation Sans', sans-serif;color:#333;letter-spacing:0.652px;white-space:nowrap;">fonts</span>
<svg style="position:absolute;left:86.00px;top:782.70px" width="14.00" height="14.00" viewBox="0 0 512 512"><path d="M464 128H272l-64-64H48C21.490 64 0 85.490 0 112v288c0 26.510 21.490 48 48 48h416c26.510 0 48-21.490 48-48V176c0-26.510-21.490-48-48-48z" fill="#f0ad4e"/></svg>
<span style="position:absolute;left:103.20px;top:778.98px;font:14.5px/22px 'Liberation Sans', sans-serif;color:#333;letter-spacing:0.320px;white-space:nowrap;">image</span>
<svg style="position:absolute;left:86.00px;top:804.70px" width="14.00" height="14.00" viewBox="0 0 512 512"><path d="M464 128H272l-64-64H48C21.490 64 0 85.490 0 112v288c0 26.510 21.490 48 48 48h416c26.510 0 48-21.490 48-48V176c0-26.510-21.490-48-48-48z" fill="#f0ad4e"/></svg>
<span style="position:absolute;left:103.20px;top:800.98px;font:14.5px/22px 'Liberation Sans', sans-serif;color:#333;letter-spacing:0.208px;white-space:nowrap;">js</span>
<svg style="position:absolute;left:86.00px;top:826.70px" width="14.00" height="14.00" viewBox="0 0 512 512"><path d="M464 128H272l-64-64H48C21.490 64 0 85.490 0 112v288c0 26.510 21.490 48 48 48h416c26.510 0 48-21.490 48-48V176c0-26.510-21.490-48-48-48z" fill="#f0ad4e"/></svg>
<span style="position:absolute;left:103.20px;top:822.98px;font:14.5px/22px 'Liberation Sans', sans-serif;color:#333;letter-spacing:0.185px;white-space:nowrap;">Online-Quiz</span>
<svg style="position:absolute;left:86.00px;top:848.70px" width="14.00" height="14.00" viewBox="0 0 512 512"><path d="M464 128H272l-64-64H48C21.490 64 0 85.490 0 112v288c0 26.510 21.490 48 48 48h416c26.510 0 48-21.490 48-48V176c0-26.510-21.490-48-48-48z" fill="#f0ad4e"/></svg>
<span style="position:absolute;left:103.20px;top:844.98px;font:14.5px/22px 'Liberation Sans', sans-serif;color:#333;letter-spacing:-0.027px;white-space:nowrap;">Quiz Game</span>
<svg style="position:absolute;left:74px;top:873px" width="9" height="10" viewBox="0 0 9 10"><path d="M0.3 5h8.4M4.5 0.8v8.4" stroke="#222" stroke-width="1.7" fill="none"/></svg>
<svg style="position:absolute;left:86.00px;top:870.70px" width="14.00" height="14.00" viewBox="0 0 512 512"><path d="M464 128H272l-64-64H48C21.490 64 0 85.490 0 112v288c0 26.510 21.490 48 48 48h416c26.510 0 48-21.490 48-48V176c0-26.510-21.490-48-48-48z" fill="#f0ad4e"/></svg>
<span style="position:absolute;left:103.20px;top:866.98px;font:14.5px/22px 'Liberation Sans', sans-serif;color:#333;letter-spacing:0.285px;white-space:nowrap;">scripts</span>
<svg style="position:absolute;left:56px;top:895px" width="9" height="10" viewBox="0 0 9 10"><path d="M0.3 5h8.4M4.5 0.8v8.4" stroke="#222" stroke-width="1.7" fill="none"/></svg>
<svg style="position:absolute;left:68.00px;top:892.70px" width="14.00" height="14.00" viewBox="0 0 512 512"><path d="M464 128H272l-64-64H48C21.490 64 0 85.490 0 112v288c0 26.510 21.490 48 48 48h416c26.510 0 48-21.490 48-48V176c0-26.510-21.490-48-48-48z" fill="#f0ad4e"/></svg>
<span style="position:absolute;left:85.20px;top:888.98px;font:14.5px/22px 'Liberation Sans', sans-serif;color:#333;letter-spacing:1.077px;white-space:nowrap;">wp</span>
<div style="position:absolute;left:0px;top:920px;width:330px;height:1px;background:#ececec"></div>
<div style="position:absolute;left:335px;top:123px;width:940px;height:36px;background:#fff;border:1px solid #ccc;box-sizing:border-box"></div>
<div style="position:absolute;left:1021px;top:124px;width:0px;height:34px;border-left:1px dotted #bbb"></div>
<svg style="position:absolute;left:349.00px;top:134.00px" width="15.75" height="14.00" viewBox="0 0 576 512"><path d="M280.370 148.260L96 300.110V464a16 16 0 0 0 16 16l112.060-.29a16 16 0 0 0 15.920-16V368a16 16 0 0 1 16-16h64a16 16 0 0 1 16 16v95.640a16 16 0 0 0 16 16.050L464 480a16 16 0 0 0 16-16V300L295.670 148.260a12.190 12.190 0 0 0-15.300 0zM571.600 251.470L488 182.560V44.050a12 12 0 0 0-12-12h-56a12 12 0 0 0-12 12v72.610L318.470 43a48 48 0 0 0-61 0L4.340 251.470a12 12 0 0 0-1.600 16.900l25.500 31A12 12 0 0 0 45.150 301l235.220-193.740a12.190 12.190 0 0 1 15.300 0L530.900 301a12 12 0 0 0 16.900-1.600l25.500-31a12 12 0 0 0-1.700-16.930z" fill="#428bca"/></svg>
<span style="position:absolute;left:368.20px;top:130.98px;font:14.5px/20px 'Liberation Sans', sans-serif;color:#428bca;letter-spacing:0.228px;white-space:nowrap;">Home</span>
<svg style="position:absolute;left:434.50px;top:134.20px" width="8.50" height="13.60" viewBox="0 0 320 512"><path d="M313.553 119.669L209.587 7.666c-9.485-10.214-25.676-10.229-35.174 0L70.438 119.669C56.232 134.969 67.062 160 88.025 160H152v272H68.024a11.996 11.996 0 0 0-8.485 3.515l-56 56C-4.021 499.074 1.333 512 12.024 512H208c13.255 0 24-10.745 24-24V160h63.966c20.878 0 31.851-24.969 17.587-40.331z" fill="#428bca"/></svg>
<span style="position:absolute;left:445.95px;top:130.98px;font:14.5px/20px 'Liberation Sans', sans-serif;color:#428bca;letter-spacing:-0.152px;white-space:nowrap;">Up One Level</span>
<svg style="position:absolute;left:559.00px;top:134.43px" width="11.50" height="13.14" viewBox="0 0 448 512"><path d="M257.500 445.100l-22.200 22.200c-9.400 9.400-24.600 9.400-33.900 0L7 273c-9.400-9.400-9.400-24.600 0-33.900L201.400 44.700c9.400-9.400 24.600-9.400 33.900 0l22.200 22.200c9.500 9.500 9.300 25-.4 34.300L136.600 216H424c13.300 0 24 10.700 24 24v32c0 13.300-10.700 24-24 24H136.600l120.500 114.800c9.800 9.300 10 24.800.4 34.300z" fill="#428bca"/></svg>
<span style="position:absolute;left:574.70px;top:130.98px;font:14.5px/20px 'Liberation Sans', sans-serif;color:#428bca;letter-spacing:-0.350px;white-space:nowrap;">Back</span>
<svg style="position:absolute;left:632.00px;top:134.29px" width="11.75" height="13.43" viewBox="0 0 448 512"><path d="M190.500 66.900l22.200-22.200c9.400-9.400 24.600-9.400 33.900 0L441 239c9.400 9.400 9.400 24.600 0 33.900L246.600 467.300c-9.400 9.400-24.600 9.400-33.900 0l-22.200-22.200c-9.500-9.500-9.300-25 .4-34.300L311.400 296H24c-13.300 0-24-10.700-24-24v-32c0-13.300 10.700-24 24-24h287.400L190.900 101.200c-9.800-9.300-10-24.800-.4-34.300z" fill="#999"/></svg>
<span style="position:absolute;left:647.20px;top:130.98px;font:14.5px/20px 'Liberation Sans', sans-serif;color:#999;letter-spacing:0.202px;white-space:nowrap;">Forward</span>
<svg style="position:absolute;left:727.50px;top:133.88px" width="14.25" height="14.25" viewBox="0 0 512 512"><path d="M370.720 133.280C339.458 104.008 298.888 87.962 255.848 88c-77.458.068-144.328 53.178-162.791 126.850-1.344 5.363-6.122 9.150-11.651 9.150H24.103c-7.498 0-13.194-6.807-11.807-14.176C33.933 94.924 134.813 8 256 8c66.448 0 126.791 26.136 171.315 68.685L463.030 40.970C478.149 25.851 504 36.559 504 57.941V192c0 13.255-10.745 24-24 24H345.941c-21.382 0-32.090-25.851-16.971-40.971l41.750-41.749zM32 296h134.059c21.382 0 32.090 25.851 16.971 40.971l-41.750 41.750c31.262 29.273 71.835 45.319 114.876 45.280 77.418-.07 144.315-53.144 162.787-126.849 1.344-5.363 6.122-9.150 11.651-9.150h57.304c7.498 0 13.194 6.807 11.807 14.176C478.067 417.076 377.187 504 256 504c-66.448 0-126.791-26.136-171.315-68.685L48.970 471.030C33.851 486.149 8 475.441 8 454.059V320c0-13.255 10.745-24 24-24z" fill="#428bca"/></svg>
<span style="position:absolute;left:745.20px;top:130.98px;font:14.5px/20px 'Liberation Sans', sans-serif;color:#428bca;letter-spacing:-0.142px;white-space:nowrap;">Reload</span>
<svg style="position:absolute;left:816.00px;top:134.14px" width="12.00" height="13.71" viewBox="0 0 448 512"><path d="M400 32H48C21.490 32 0 53.490 0 80v352c0 26.510 21.490 48 48 48h352c26.510 0 48-21.490 48-48V80c0-26.510-21.490-48-48-48zm0 400H48V80h352v352zm-35.864-241.724L191.547 361.480c-4.705 4.667-12.303 4.637-16.970-.068l-90.781-91.516c-4.667-4.705-4.637-12.303.069-16.971l22.719-22.536c4.705-4.667 12.303-4.637 16.970.069l59.792 60.277 141.352-140.216c4.705-4.667 12.303-4.637 16.970.068l22.536 22.718c4.667 4.706 4.637 12.304-.068 16.971z" fill="#428bca"/></svg>
<span style="position:absolute;left:831.70px;top:130.98px;font:14.5px/20px 'Liberation Sans', sans-serif;color:#428bca;letter-spacing:-0.106px;white-space:nowrap;">Select All</span>
<svg style="position:absolute;left:916.30px;top:134.03px" width="12.20" height="13.94" viewBox="0 0 448 512"><path d="M400 32H48C21.500 32 0 53.500 0 80v352c0 26.500 21.500 48 48 48h352c26.500 0 48-21.500 48-48V80c0-26.500-21.500-48-48-48zm-6 400H54c-3.300 0-6-2.700-6-6V86c0-3.300 2.700-6 6-6h340c3.300 0 6 2.700 6 6v340c0 3.300-2.700 6-6 6z" fill="#999"/></svg>
<span style="position:absolute;left:931.80px;top:130.98px;font:14.5px/20px 'Liberation Sans', sans-serif;color:#999;letter-spacing:0.061px;white-space:nowrap;">Unselect All</span>
<svg style="position:absolute;left:1035.8px;top:130.5px" width="15" height="17" viewBox="0 0 15 17"><path d="M4.6 3.8V1.9h5.4V3.8" fill="none" stroke="#3d78b3" stroke-width="1.1"/><path d="M0 3.9h14.3" stroke="#3d78b3" stroke-width="1.1"/><rect x="2" y="6.9" width="9.8" height="9" fill="#cfe6f9" stroke="#3d78b3" stroke-width="1.1"/><path d="M4.3 6.9v9M6.9 6.900v9M9.500 6.900v9" stroke="#3d78b3" stroke-width="0.9"/></svg>
<span style="position:absolute;left:1052.20px;top:130.98px;font:14.5px/20px 'Liberation Sans', sans-serif;color:#428bca;letter-spacing:-0.127px;white-space:nowrap;">View Trash</span>
<svg style="position:absolute;left:1148.6px;top:130.5px" width="15" height="17" viewBox="0 0 15 17"><path d="M4.6 3.8V1.9h5.4V3.8" fill="none" stroke="#999" stroke-width="1.1"/><path d="M0 3.9h14.3" stroke="#999" stroke-width="1.1"/><rect x="2" y="6.9" width="9.8" height="9" fill="#ececec" stroke="#999" stroke-width="1.1"/><path d="M4.3 6.9v9M6.9 6.900v9M9.500 6.900v9" stroke="#999" stroke-width="0.9"/></svg>
<span style="position:absolute;left:1165.20px;top:130.98px;font:14.5px/20px 'Liberation Sans', sans-serif;color:#999;letter-spacing:0.019px;white-space:nowrap;">Empty Trash</span>
<div style="position:absolute;left:335px;top:164px;width:940px;height:36px;background:#f1f1f1;border:1px solid #ccc;box-sizing:border-box"></div>
<span style="position:absolute;left:375px;top:172px;font:14px/20px 'Liberation Sans', sans-serif;color:#428bca;white-space:nowrap">Name</span>
<span style="position:absolute;left:691.6px;top:172px;font:14px/20px 'Liberation Sans', sans-serif;color:#428bca;white-space:nowrap">Size</span>
<span style="position:absolute;left:791.6px;top:172px;font:14px/20px 'Liberation Sans', sans-serif;color:#428bca;white-space:nowrap">Last Modified</span>
<span style="position:absolute;left:991.6px;top:172px;font:14px/20px 'Liberation Sans', sans-serif;color:#428bca;white-space:nowrap">Type</span>
<span style="position:absolute;left:1171.6px;top:172px;font:14px/20px 'Liberation Sans', sans-serif;color:#428bca;white-space:nowrap">Permissions</span>
<div style="position:absolute;left:335px;top:200px;width:1px;height:721px;background:#ccc"></div>
<div style="position:absolute;left:1274px;top:200px;width:1px;height:721px;background:#ccc"></div>
<div style="position:absolute;left:336px;top:200px;width:923px;height:30px;background:#fff"></div>
<div style="position:absolute;left:336px;top:230px;width:923px;height:1px;background:#ddd"></div>
<svg style="position:absolute;left:341.00px;top:204.70px" width="20.00" height="20.00" viewBox="0 0 512 512"><path d="M464 128H272l-64-64H48C21.490 64 0 85.490 0 112v288c0 26.510 21.490 48 48 48h416c26.510 0 48-21.490 48-48V176c0-26.510-21.490-48-48-48z" fill="#f0ad4e"/></svg>
<span style="position:absolute;left:375px;top:205px;font:14px/20px 'Liberation Sans', sans-serif;color:#333;white-space:nowrap">.well-known</span>
<span style="position:absolute;left:691.6px;top:205.0px;font:14px/20px 'Liberation Sans', sans-serif;color:#333;white-space:nowrap">60 bytes</span>
<span style="position:absolute;left:791.6px;top:205.0px;font:14px/20px 'Liberation Sans', sans-serif;color:#333;white-space:nowrap">Jan 25, 2021, 10:33 AM</span>
<span style="position:absolute;left:991.6px;top:205.0px;font:14px/20px 'Liberation Sans', sans-serif;color:#333;white-space:nowrap">httpd/unix-directory</span>
<span style="position:absolute;left:1171.6px;top:205.0px;font:14px/20px 'Liberation Sans', sans-serif;color:#333;white-space:nowrap">0755</span>
<div style="position:absolute;left:336px;top:231px;width:923px;height:30px;background:#f9f9f9"></div>
<div style="position:absolute;left:336px;top:261px;width:923px;height:1px;background:#ddd"></div>
<svg style="position:absolute;left:341.00px;top:235.70px" width="20.00" height="20.00" viewBox="0 0 512 512"><path d="M464 128H272l-64-64H48C21.490 64 0 85.490 0 112v288c0 26.510 21.490 48 48 48h416c26.510 0 48-21.490 48-48V176c0-26.510-21.490-48-48-48z" fill="#f0ad4e"/></svg>
<span style="position:absolute;left:375px;top:236px;font:14px/20px 'Liberation Sans', sans-serif;color:#333;white-space:nowrap">cgi-bin</span>
<span style="position:absolute;left:691.6px;top:236.0px;font:14px/20px 'Liberation Sans', sans-serif;color:#333;white-space:nowrap">10 bytes</span>
<span style="position:absolute;left:791.6px;top:236.0px;font:14px/20px 'Liberation Sans', sans-serif;color:#333;white-space:nowrap">Oct 29, 2020, 5:32 PM</span>
<span style="position:absolute;left:991.6px;top:236.0px;font:14px/20px 'Liberation Sans', sans-serif;color:#333;white-space:nowrap">httpd/unix-directory</span>
<span style="position:absolute;left:1171.6px;top:236.0px;font:14px/20px 'Liberation Sans', sans-serif;color:#333;white-space:nowrap">0755</span>
<div style="position:absolute;left:336px;top:262px;width:923px;height:30px;background:#fff"></div>
<div style="position:absolute;left:336px;top:292px;width:923px;height:1px;background:#ddd"></div>
<svg style="position:absolute;left:341.00px;top:266.70px" width="20.00" height="20.00" viewBox="0 0 512 512"><path d="M464 128H272l-64-64H48C21.490 64 0 85.490 0 112v288c0 26.510 21.490 48 48 48h416c26.510 0 48-21.490 48-48V176c0-26.510-21.490-48-48-48z" fill="#f0ad4e"/></svg>
<span style="position:absolute;left:375px;top:267px;font:14px/20px 'Liberation Sans', sans-serif;color:#333;white-space:nowrap">css</span>
<span style="position:absolute;left:691.6px;top:267.0px;font:14px/20px 'Liberation Sans', sans-serif;color:#333;white-space:nowrap">152 bytes</span>
<span style="position:absolute;left:791.6px;top:267.0px;font:14px/20px 'Liberation Sans', sans-serif;color:#333;white-space:nowrap">Jun 3, 2018, 7:26 AM</span>
<span style="position:absolute;left:991.6px;top:267.0px;font:14px/20px 'Liberation Sans', sans-serif;color:#333;white-space:nowrap">httpd/unix-directory</span>
<span style="position:absolute;left:1171.6px;top:267.0px;font:14px/20px 'Liberation Sans', sans-serif;color:#333;white-space:nowrap">0755</span>
<div style="position:absolute;left:336px;top:293px;width:923px;height:30px;background:#f9f9f9"></div>
<div style="position:absolute;left:336px;top:323px;width:923px;height:1px;background:#ddd"></div>
<svg style="position:absolute;left:341.00px;top:297.70px" width="20.00" height="20.00" viewBox="0 0 512 512"><path d="M464 128H272l-64-64H48C21.490 64 0 85.490 0 112v288c0 26.510 21.490 48 48 48h416c26.510 0 48-21.490 48-48V176c0-26.510-21.490-48-48-48z" fill="#f0ad4e"/></svg>
<span style="position:absolute;left:375px;top:298px;font:14px/20px 'Liberation Sans', sans-serif;color:#333;white-space:nowrap">fonts</span>
<span style="position:absolute;left:691.6px;top:298.0px;font:14px/20px 'Liberation Sans', sans-serif;color:#333;white-space:nowrap">4 KB</span>
<span style="position:absolute;left:791.6px;top:298.0px;font:14px/20px 'Liberation Sans', sans-serif;color:#333;white-space:nowrap">Jun 3, 2018, 7:30 AM</span>
<span style="position:absolute;left:991.6px;top:298.0px;font:14px/20px 'Liberation Sans', sans-serif;color:#333;white-space:nowrap">httpd/unix-directory</span>
<span style="position:absolute;left:1171.6px;top:298.0px;font:14px/20px 'Liberation Sans', sans-serif;color:#333;white-space:nowrap">0755</span>
<div style="position:absolute;left:336px;top:324px;width:923px;height:30px;background:#fff"></div>
<div style="position:absolute;left:336px;top:354px;width:923px;height:1px;background:#ddd"></div>
<svg style="position:absolute;left:341.00px;top:328.70px" width="20.00" height="20.00" viewBox="0 0 512 512"><path d="M464 128H272l-64-64H48C21.490 64 0 85.490 0 112v288c0 26.510 21.490 48 48 48h416c26.510 0 48-21.490 48-48V176c0-26.510-21.490-48-48-48z" fill="#f0ad4e"/></svg>
<span style="position:absolute;left:375px;top:329px;font:14px/20px 'Liberation Sans', sans-serif;color:#333;white-space:nowrap">image</span>
<span style="position:absolute;left:691.6px;top:329.0px;font:14px/20px 'Liberation Sans', sans-serif;color:#333;white-space:nowrap">29 bytes</span>
<span style="position:absolute;left:791.6px;top:329.0px;font:14px/20px 'Liberation Sans', sans-serif;color:#333;white-space:nowrap">Jun 1, 2018, 6:39 AM</span>
<span style="position:absolute;left:991.6px;top:329.0px;font:14px/20px 'Liberation Sans', sans-serif;color:#333;white-space:nowrap">httpd/unix-directory</span>
<span style="position:absolute;left:1171.6px;top:329.0px;font:14px/20px 'Liberation Sans', sans-serif;color:#333;white-space:nowrap">0755</span>
<div style="position:absolute;left:336px;top:355px;width:923px;height:30px;background:#f9f9f9"></div>
<div style="position:absolute;left:336px;top:385px;width:923px;height:1px;background:#ddd"></div>
<svg style="position:absolute;left:341.00px;top:359.70px" width="20.00" height="20.00" viewBox="0 0 512 512"><path d="M464 128H272l-64-64H48C21.490 64 0 85.490 0 112v288c0 26.510 21.490 48 48 48h416c26.510 0 48-21.490 48-48V176c0-26.510-21.490-48-48-48z" fill="#f0ad4e"/></svg>
<span style="position:absolute;left:375px;top:360px;font:14px/20px 'Liberation Sans', sans-serif;color:#333;white-space:nowrap">js</span>
<span style="position:absolute;left:691.6px;top:360.0px;font:14px/20px 'Liberation Sans', sans-serif;color:#333;white-space:nowrap">98 bytes</span>
<span style="position:absolute;left:791.6px;top:360.0px;font:14px/20px 'Liberation Sans', sans-serif;color:#333;white-space:nowrap">Jun 2, 2018, 2:28 AM</span>
<span style="position:absolute;left:991.6px;top:360.0px;font:14px/20px 'Liberation Sans', sans-serif;color:#333;white-space:nowrap">httpd/unix-directory</span>
<span style="position:absolute;left:1171.6px;top:360.0px;font:14px/20px 'Liberation Sans', sans-serif;color:#333;white-space:nowrap">0755</span>
<div style="position:absolute;left:336px;top:386px;width:923px;height:30px;background:#fff"></div>
<div style="position:absolute;left:336px;top:416px;width:923px;height:1px;background:#ddd"></div>
<svg style="position:absolute;left:341.00px;top:390.70px" width="20.00" height="20.00" viewBox="0 0 512 512"><path d="M464 128H272l-64-64H48C21.490 64 0 85.490 0 112v288c0 26.510 21.490 48 48 48h416c26.510 0 48-21.490 48-48V176c0-26.510-21.490-48-48-48z" fill="#f0ad4e"/></svg>
<span style="position:absolute;left:375px;top:391px;font:14px/20px 'Liberation Sans', sans-serif;color:#333;white-space:nowrap">Online-Quiz</span>
<span style="position:absolute;left:691.6px;top:391.0px;font:14px/20px 'Liberation Sans', sans-serif;color:#333;white-space:nowrap">10 bytes</span>
<span style="position:absolute;left:791.6px;top:391.0px;font:14px/20px 'Liberation Sans', sans-serif;color:#333;white-space:nowrap">Oct 29, 2020, 5:41 PM</span>
<span style="position:absolute;left:991.6px;top:391.0px;font:14px/20px 'Liberation Sans', sans-serif;color:#333;white-space:nowrap">httpd/unix-directory</span>
<span style="position:absolute;left:1171.6px;top:391.0px;font:14px/20px 'Liberation Sans', sans-serif;color:#333;white-space:nowrap">0755</span>
<div style="position:absolute;left:336px;top:417px;width:923px;height:30px;background:#f9f9f9"></div>
<div style="position:absolute;left:336px;top:447px;width:923px;height:1px;background:#ddd"></div>
<svg style="position:absolute;left:341.00px;top:421.70px" width="20.00" height="20.00" viewBox="0 0 512 512"><path d="M464 128H272l-64-64H48C21.490 64 0 85.490 0 112v288c0 26.510 21.490 48 48 48h416c26.510 0 48-21.490 48-48V176c0-26.510-21.490-48-48-48z" fill="#f0ad4e"/></svg>
<span style="position:absolute;left:375px;top:422px;font:14px/20px 'Liberation Sans', sans-serif;color:#333;white-space:nowrap">Quiz Game</span>
<span style="position:absolute;left:691.6px;top:422.0px;font:14px/20px 'Liberation Sans', sans-serif;color:#333;white-space:nowrap">10 bytes</span>
<span style="position:absolute;left:791.6px;top:422.0px;font:14px/20px 'Liberation Sans', sans-serif;color:#333;white-space:nowrap">Oct 29, 2020, 5:41 PM</span>
<span style="position:absolute;left:991.6px;top:422.0px;font:14px/20px 'Liberation Sans', sans-serif;color:#333;white-space:nowrap">httpd/unix-directory</span>
<span style="position:absolute;left:1171.6px;top:422.0px;font:14px/20px 'Liberation Sans', sans-serif;color:#333;white-space:nowrap">0755</span>
<div style="position:absolute;left:336px;top:448px;width:923px;height:30px;background:#fff"></div>
<div style="position:absolute;left:336px;top:478px;width:923px;height:1px;background:#ddd"></div>
<svg style="position:absolute;left:341.00px;top:452.70px" width="20.00" height="20.00" viewBox="0 0 512 512"><path d="M464 128H272l-64-64H48C21.490 64 0 85.490 0 112v288c0 26.510 21.490 48 48 48h416c26.510 0 48-21.490 48-48V176c0-26.510-21.490-48-48-48z" fill="#f0ad4e"/></svg>
<span style="position:absolute;left:375px;top:453px;font:14px/20px 'Liberation Sans', sans-serif;color:#333;white-space:nowrap">scripts</span>
<span style="position:absolute;left:691.6px;top:453.0px;font:14px/20px 'Liberation Sans', sans-serif;color:#333;white-space:nowrap">49 bytes</span>
<span style="position:absolute;left:791.6px;top:453.0px;font:14px/20px 'Liberation Sans', sans-serif;color:#333;white-space:nowrap">May 31, 2018, 7:00 AM</span>
<span style="position:absolute;left:991.6px;top:453.0px;font:14px/20px 'Liberation Sans', sans-serif;color:#333;white-space:nowrap">httpd/unix-directory</span>
<span style="position:absolute;left:1171.6px;top:453.0px;font:14px/20px 'Liberation Sans', sans-serif;color:#333;white-space:nowrap">0755</span>
<div style="position:absolute;left:336px;top:479px;width:923px;height:30px;background:#d5ecfa"></div>
<div style="position:absolute;left:336px;top:509px;width:923px;height:1px;background:#ddd"></div>
<div style="position:absolute;left:336px;top:478px;width:2px;height:31px;background:#1191d9"></div>
<svg style="position:absolute;left:341.00px;top:483.50px" width="15.00" height="20.00" viewBox="0 0 384 512"><path d="M224 136V0H24C10.700 0 0 10.700 0 24v464c0 13.300 10.700 24 24 24h336c13.300 0 24-10.700 24-24V160H248c-13.200 0-24-10.800-24-24zm64 236c0 6.600-5.400 12-12 12H108c-6.600 0-12-5.400-12-12v-8c0-6.600 5.400-12 12-12h168c6.600 0 12 5.400 12 12v8zm0-64c0 6.600-5.400 12-12 12H108c-6.600 0-12-5.400-12-12v-8c0-6.600 5.400-12 12-12h168c6.600 0 12 5.400 12 12v8zm0-72v8c0 6.600-5.400 12-12 12H108c-6.600 0-12-5.400-12-12v-8c0-6.600 5.400-12 12-12h168c6.600 0 12 5.400 12 12zm96-114.100v6.100H256V0h6.100c6.400 0 12.500 2.500 17 7l97.900 98c4.500 4.500 7 10.600 7 16.900z" fill="#70569b"/></svg>
<span style="position:absolute;left:375px;top:484px;font:14px/20px 'Liberation Sans', sans-serif;color:#333;white-space:nowrap">.htaccess</span>
<span style="position:absolute;left:691.6px;top:484.0px;font:14px/20px 'Liberation Sans', sans-serif;color:#333;white-space:nowrap">152 bytes</span>
<span style="position:absolute;left:791.6px;top:484.0px;font:14px/20px 'Liberation Sans', sans-serif;color:#333;white-space:nowrap">Jan 30, 2021, 1:37 PM</span>
<span style="position:absolute;left:991.6px;top:484.0px;font:14px/20px 'Liberation Sans', sans-serif;color:#333;white-space:nowrap">text/x-generic</span>
<span style="position:absolute;left:1171.6px;top:484.0px;font:14px/20px 'Liberation Sans', sans-serif;color:#333;white-space:nowrap">0644</span>
<div style="position:absolute;left:336px;top:510px;width:923px;height:30px;background:#fff"></div>
<div style="position:absolute;left:336px;top:540px;width:923px;height:1px;background:#ddd"></div>
<svg style="position:absolute;left:341.00px;top:514.50px" width="15.00" height="20.00" viewBox="0 0 384 512"><path d="M224 136V0H24C10.700 0 0 10.700 0 24v464c0 13.300 10.700 24 24 24h336c13.300 0 24-10.700 24-24V160H248c-13.200 0-24-10.800-24-24zm64 236c0 6.600-5.400 12-12 12H108c-6.600 0-12-5.400-12-12v-8c0-6.600 5.400-12 12-12h168c6.600 0 12 5.400 12 12v8zm0-64c0 6.600-5.400 12-12 12H108c-6.600 0-12-5.400-12-12v-8c0-6.600 5.400-12 12-12h168c6.600 0 12 5.400 12 12v8zm0-72v8c0 6.600-5.400 12-12 12H108c-6.600 0-12-5.400-12-12v-8c0-6.600 5.400-12 12-12h168c6.600 0 12 5.400 12 12zm96-114.100v6.100H256V0h6.100c6.400 0 12.500 2.500 17 7l97.900 98c4.500 4.500 7 10.600 7 16.900z" fill="#70569b"/></svg>
<span style="position:absolute;left:375px;top:515px;font:14px/20px 'Liberation Sans', sans-serif;color:#333;white-space:nowrap">admin.php</span>
<span style="position:absolute;left:691.6px;top:515.0px;font:14px/20px 'Liberation Sans', sans-serif;color:#333;white-space:nowrap">3.22 KB</span>
<span style="position:absolute;left:791.6px;top:515.0px;font:14px/20px 'Liberation Sans', sans-serif;color:#333;white-space:nowrap">Jan 30, 2021, 1:37 PM</span>
<span style="position:absolute;left:991.6px;top:515.0px;font:14px/20px 'Liberation Sans', sans-serif;color:#333;white-space:nowrap">text/x-generic</span>
<span style="position:absolute;left:1171.6px;top:515.0px;font:14px/20px 'Liberation Sans', sans-serif;color:#333;white-space:nowrap">0644</span>
<div style="position:absolute;left:336px;top:541px;width:923px;height:30px;background:#f9f9f9"></div>
<div style="position:absolute;left:336px;top:571px;width:923px;height:1px;background:#ddd"></div>
<svg style="position:absolute;left:340.8px;top:545.1px" width="16" height="22" viewBox="0 0 16 22"><path d="M2.6 1.2h7.200l4.400 4.400v12.800a1.500 1.500 0 0 1-1.500 1.500h-10.100a1.500 1.500 0 0 1-1.500-1.500v-15.700a1.500 1.500 0 0 1 1.500-1.500z" fill="#fdf9f0" stroke="#573d1f" stroke-width="1.900" stroke-linejoin="round"/><path d="M9.600 1.400v4.500h4.500" fill="#fff" stroke="#573d1f" stroke-width="1.700" stroke-linejoin="round"/><path d="M5.300 3.300h1.400M6.500 4.900h1.400M5.300 6.500h1.400M6.500 8.100h1.400" stroke="#573d1f" stroke-width="1.300"/><path d="M6.500 9.400l1.200 3.900a2 2.200 0 1 1-2.800 0z" fill="#573d1f"/><circle cx="6.300" cy="14.600" r="1" fill="#fff"/></svg>
<span style="position:absolute;left:375px;top:546px;font:14px/20px 'Liberation Sans', sans-serif;color:#333;white-space:nowrap">CA_Project.zip</span>
<span style="position:absolute;left:691.6px;top:546.0px;font:14px/20px 'Liberation Sans', sans-serif;color:#333;white-space:nowrap">2.66 KB</span>
<span style="position:absolute;left:791.6px;top:546.0px;font:14px/20px 'Liberation Sans', sans-serif;color:#333;white-space:nowrap">Mar 17, 2021, 5:06 PM</span>
<span style="position:absolute;left:991.6px;top:546.0px;font:14px/20px 'Liberation Sans', sans-serif;color:#333;white-space:nowrap">package/x-generic</span>
<span style="position:absolute;left:1171.6px;top:546.0px;font:14px/20px 'Liberation Sans', sans-serif;color:#333;white-space:nowrap">0644</span>
<div style="position:absolute;left:336px;top:572px;width:923px;height:30px;background:#fff"></div>
<div style="position:absolute;left:336px;top:602px;width:923px;height:1px;background:#ddd"></div>
<svg style="position:absolute;left:341.00px;top:576.50px" width="15.00" height="20.00" viewBox="0 0 384 512"><path d="M224 136V0H24C10.700 0 0 10.700 0 24v464c0 13.300 10.700 24 24 24h336c13.300 0 24-10.700 24-24V160H248c-13.200 0-24-10.800-24-24zm64 236c0 6.600-5.400 12-12 12H108c-6.600 0-12-5.400-12-12v-8c0-6.600 5.400-12 12-12h168c6.600 0 12 5.400 12 12v8zm0-64c0 6.600-5.400 12-12 12H108c-6.600 0-12-5.400-12-12v-8c0-6.600 5.400-12 12-12h168c6.600 0 12 5.400 12 12v8zm0-72v8c0 6.600-5.400 12-12 12H108c-6.600 0-12-5.400-12-12v-8c0-6.600 5.400-12 12-12h168c6.600 0 12 5.400 12 12zm96-114.100v6.100H256V0h6.100c6.400 0 12.500 2.500 17 7l97.900 98c4.500 4.500 7 10.600 7 16.900z" fill="#70569b"/></svg>
<span style="position:absolute;left:375px;top:577px;font:14px/20px 'Liberation Sans', sans-serif;color:#333;white-space:nowrap">dash.php</span>
<span style="position:absolute;left:691.6px;top:577.0px;font:14px/20px 'Liberation Sans', sans-serif;color:#333;white-space:nowrap">22.39 KB</span>
<span style="position:absolute;left:791.6px;top:577.0px;font:14px/20px 'Liberation Sans', sans-serif;color:#333;white-space:nowrap">Mar 24, 2021, 11:11 AM</span>
<span style="position:absolute;left:991.6px;top:577.0px;font:14px/20px 'Liberation Sans', sans-serif;color:#333;white-space:nowrap">text/x-generic</span>
<span style="position:absolute;left:1171.6px;top:577.0px;font:14px/20px 'Liberation Sans', sans-serif;color:#333;white-space:nowrap">0644</span>
<div style="position:absolute;left:336px;top:603px;width:923px;height:30px;background:#f9f9f9"></div>
<div style="position:absolute;left:336px;top:633px;width:923px;height:1px;background:#ddd"></div>
<svg style="position:absolute;left:341.00px;top:607.50px" width="15.00" height="20.00" viewBox="0 0 384 512"><path d="M224 136V0H24C10.700 0 0 10.700 0 24v464c0 13.300 10.700 24 24 24h336c13.300 0 24-10.700 24-24V160H248c-13.200 0-24-10.800-24-24zm64 236c0 6.600-5.400 12-12 12H108c-6.600 0-12-5.400-12-12v-8c0-6.600 5.400-12 12-12h168c6.600 0 12 5.400 12 12v8zm0-64c0 6.600-5.400 12-12 12H108c-6.600 0-12-5.400-12-12v-8c0-6.600 5.400-12 12-12h168c6.600 0 12 5.400 12 12v8zm0-72v8c0 6.600-5.400 12-12 12H108c-6.600 0-12-5.400-12-12v-8c0-6.600 5.400-12 12-12h168c6.600 0 12 5.400 12 12zm96-114.100v6.100H256V0h6.100c6.400 0 12.500 2.500 17 7l97.900 98c4.500 4.500 7 10.600 7 16.900z" fill="#70569b"/></svg>
<span style="position:absolute;left:375px;top:608px;font:14px/20px 'Liberation Sans', sans-serif;color:#333;white-space:nowrap">data.php</span>
<span style="position:absolute;left:691.6px;top:608.0px;font:14px/20px 'Liberation Sans', sans-serif;color:#333;white-space:nowrap">145 bytes</span>
<span style="position:absolute;left:791.6px;top:608.0px;font:14px/20px 'Liberation Sans', sans-serif;color:#333;white-space:nowrap">Jan 30, 2021, 1:37 PM</span>
<span style="position:absolute;left:991.6px;top:608.0px;font:14px/20px 'Liberation Sans', sans-serif;color:#333;white-space:nowrap">text/x-generic</span>
<span style="position:absolute;left:1171.6px;top:608.0px;font:14px/20px 'Liberation Sans', sans-serif;color:#333;white-space:nowrap">0644</span>
<div style="position:absolute;left:336px;top:634px;width:923px;height:30px;background:#fff"></div>
<div style="position:absolute;left:336px;top:664px;width:923px;height:1px;background:#ddd"></div>
<svg style="position:absolute;left:341.00px;top:638.50px" width="15.00" height="20.00" viewBox="0 0 384 512"><path d="M224 136V0H24C10.700 0 0 10.700 0 24v464c0 13.300 10.700 24 24 24h336c13.300 0 24-10.700 24-24V160H248c-13.200 0-24-10.800-24-24zm64 236c0 6.600-5.400 12-12 12H108c-6.600 0-12-5.400-12-12v-8c0-6.600 5.400-12 12-12h168c6.600 0 12 5.400 12 12v8zm0-64c0 6.600-5.400 12-12 12H108c-6.600 0-12-5.400-12-12v-8c0-6.600 5.400-12 12-12h168c6.600 0 12 5.400 12 12v8zm0-72v8c0 6.600-5.400 12-12 12H108c-6.600 0-12-5.400-12-12v-8c0-6.600 5.400-12 12-12h168c6.600 0 12 5.400 12 12zm96-114.100v6.100H256V0h6.100c6.400 0 12.500 2.500 17 7l97.900 98c4.500 4.500 7 10.600 7 16.900z" fill="#70569b"/></svg>
<span style="position:absolute;left:375px;top:639px;font:14px/20px 'Liberation Sans', sans-serif;color:#333;white-space:nowrap">error_log</span>
<span style="position:absolute;left:691.6px;top:639.0px;font:14px/20px 'Liberation Sans', sans-serif;color:#333;white-space:nowrap">212.51 KB</span>
<span style="position:absolute;left:791.6px;top:639.0px;font:14px/20px 'Liberation Sans', sans-serif;color:#333;white-space:nowrap">Aug 2, 2021, 11:07 PM</span>
<span style="position:absolute;left:991.6px;top:639.0px;font:14px/20px 'Liberation Sans', sans-serif;color:#333;white-space:nowrap">text/x-generic</span>
<span style="position:absolute;left:1171.6px;top:639.0px;font:14px/20px 'Liberation Sans', sans-serif;color:#333;white-space:nowrap">0644</span>
<div style="position:absolute;left:336px;top:665px;width:923px;height:30px;background:#f9f9f9"></div>
<div style="position:absolute;left:336px;top:695px;width:923px;height:1px;background:#ddd"></div>
<svg style="position:absolute;left:340.8px;top:669.1px" width="16" height="22" viewBox="0 0 16 22"><path d="M2.600 1.200h7.200l4.400 4.400v12.800a1.500 1.500 0 0 1-1.500 1.500h-10.100a1.500 1.500 0 0 1-1.500-1.500v-15.700a1.500 1.500 0 0 1 1.500-1.500z" fill="#fff" stroke="#3a4253" stroke-width="1.900" stroke-linejoin="round"/><path d="M9.600 1.400v4.500h4.500" fill="#fff" stroke="#3a4253" stroke-width="1.700" stroke-linejoin="round"/><path d="M5.600 10.700l-2 2.200 2 2.200M9.600 10.700l2 2.200-2 2.200M8.400 9.900l-1.600 6" fill="none" stroke="#3a4253" stroke-width="1.600" stroke-linecap="round" stroke-linejoin="round"/></svg>
<span style="position:absolute;left:375px;top:670px;font:14px/20px 'Liberation Sans', sans-serif;color:#333;white-space:nowrap">exam.sql</span>
<span style="position:absolute;left:691.6px;top:670.0px;font:14px/20px 'Liberation Sans', sans-serif;color:#333;white-space:nowrap">12.94 KB</span>
<span style="position:absolute;left:791.6px;top:670.0px;font:14px/20px 'Liberation Sans', sans-serif;color:#333;white-space:nowrap">Jan 30, 2021, 1:37 PM</span>
<span style="position:absolute;left:991.6px;top:670.0px;font:14px/20px 'Liberation Sans', sans-serif;color:#333;white-space:nowrap">text/x-sql</span>
<span style="position:absolute;left:1171.6px;top:670.0px;font:14px/20px 'Liberation Sans', sans-serif;color:#333;white-space:nowrap">0644</span>
<div style="position:absolute;left:336px;top:696px;width:923px;height:30px;background:#fff"></div>
<div style="position:absolute;left:336px;top:726px;width:923px;height:1px;background:#ddd"></div>
<svg style="position:absolute;left:341.00px;top:700.50px" width="15.00" height="20.00" viewBox="0 0 384 512"><path d="M224 136V0H24C10.700 0 0 10.700 0 24v464c0 13.300 10.700 24 24 24h336c13.300 0 24-10.700 24-24V160H248c-13.200 0-24-10.800-24-24zm64 236c0 6.600-5.400 12-12 12H108c-6.600 0-12-5.400-12-12v-8c0-6.600 5.400-12 12-12h168c6.600 0 12 5.400 12 12v8zm0-64c0 6.600-5.400 12-12 12H108c-6.600 0-12-5.400-12-12v-8c0-6.600 5.400-12 12-12h168c6.600 0 12 5.400 12 12v8zm0-72v8c0 6.600-5.400 12-12 12H108c-6.600 0-12-5.400-12-12v-8c0-6.600 5.400-12 12-12h168c6.600 0 12 5.400 12 12zm96-114.100v6.100H256V0h6.100c6.400 0 12.500 2.500 17 7l97.900 98c4.500 4.500 7 10.600 7 16.900z" fill="#70569b"/></svg>
<span style="position:absolute;left:375px;top:701px;font:14px/20px 'Liberation Sans', sans-serif;color:#333;white-space:nowrap">index.php</span>
<span style="position:absolute;left:691.6px;top:701.0px;font:14px/20px 'Liberation Sans', sans-serif;color:#333;white-space:nowrap">1.11 KB</span>
<span style="position:absolute;left:791.6px;top:701.0px;font:14px/20px 'Liberation Sans', sans-serif;color:#333;white-space:nowrap">Jan 30, 2021, 1:37 PM</span>
<span style="position:absolute;left:991.6px;top:701.0px;font:14px/20px 'Liberation Sans', sans-serif;color:#333;white-space:nowrap">text/x-generic</span>
<span style="position:absolute;left:1171.6px;top:701.0px;font:14px/20px 'Liberation Sans', sans-serif;color:#333;white-space:nowrap">0644</span>
<div style="position:absolute;left:336px;top:727px;width:923px;height:30px;background:#f9f9f9"></div>
<div style="position:absolute;left:336px;top:757px;width:923px;height:1px;background:#ddd"></div>
<svg style="position:absolute;left:341.00px;top:731.50px" width="15.00" height="20.00" viewBox="0 0 384 512"><path d="M224 136V0H24C10.700 0 0 10.700 0 24v464c0 13.300 10.700 24 24 24h336c13.300 0 24-10.700 24-24V160H248c-13.200 0-24-10.800-24-24zm64 236c0 6.600-5.400 12-12 12H108c-6.600 0-12-5.400-12-12v-8c0-6.600 5.400-12 12-12h168c6.600 0 12 5.400 12 12v8zm0-64c0 6.600-5.400 12-12 12H108c-6.600 0-12-5.400-12-12v-8c0-6.600 5.400-12 12-12h168c6.600 0 12 5.400 12 12v8zm0-72v8c0 6.600-5.400 12-12 12H108c-6.600 0-12-5.400-12-12v-8c0-6.600 5.400-12 12-12h168c6.600 0 12 5.400 12 12zm96-114.100v6.100H256V0h6.100c6.400 0 12.500 2.500 17 7l97.900 98c4.500 4.500 7 10.600 7 16.900z" fill="#70569b"/></svg>
<span style="position:absolute;left:375px;top:732px;font:14px/20px 'Liberation Sans', sans-serif;color:#333;white-space:nowrap">LICENSE</span>
<span style="position:absolute;left:691.6px;top:732.0px;font:14px/20px 'Liberation Sans', sans-serif;color:#333;white-space:nowrap">11.09 KB</span>
<span style="position:absolute;left:791.6px;top:732.0px;font:14px/20px 'Liberation Sans', sans-serif;color:#333;white-space:nowrap">Jan 30, 2021, 1:37 PM</span>
<span style="position:absolute;left:991.6px;top:732.0px;font:14px/20px 'Liberation Sans', sans-serif;color:#333;white-space:nowrap">text/x-generic</span>
<span style="position:absolute;left:1171.6px;top:732.0px;font:14px/20px 'Liberation Sans', sans-serif;color:#333;white-space:nowrap">0644</span>
<div style="position:absolute;left:336px;top:758px;width:923px;height:30px;background:#fff"></div>
<div style="position:absolute;left:336px;top:788px;width:923px;height:1px;background:#ddd"></div>
<svg style="position:absolute;left:341.00px;top:762.50px" width="15.00" height="20.00" viewBox="0 0 384 512"><path d="M224 136V0H24C10.700 0 0 10.700 0 24v464c0 13.300 10.700 24 24 24h336c13.300 0 24-10.700 24-24V160H248c-13.200 0-24-10.800-24-24zm64 236c0 6.600-5.400 12-12 12H108c-6.600 0-12-5.400-12-12v-8c0-6.600 5.400-12 12-12h168c6.600 0 12 5.400 12 12v8zm0-64c0 6.600-5.400 12-12 12H108c-6.600 0-12-5.400-12-12v-8c0-6.600 5.400-12 12-12h168c6.600 0 12 5.400 12 12v8zm0-72v8c0 6.600-5.400 12-12 12H108c-6.600 0-12-5.400-12-12v-8c0-6.600 5.400-12 12-12h168c6.600 0 12 5.400 12 12zm96-114.100v6.100H256V0h6.100c6.400 0 12.500 2.500 17 7l97.900 98c4.500 4.500 7 10.600 7 16.900z" fill="#70569b"/></svg>
<span style="position:absolute;left:375px;top:763px;font:14px/20px 'Liberation Sans', sans-serif;color:#333;white-space:nowrap">login.php</span>
<span style="position:absolute;left:691.6px;top:763.0px;font:14px/20px 'Liberation Sans', sans-serif;color:#333;white-space:nowrap">3.11 KB</span>
<span style="position:absolute;left:791.6px;top:763.0px;font:14px/20px 'Liberation Sans', sans-serif;color:#333;white-space:nowrap">Jan 30, 2021, 1:37 PM</span>
<span style="position:absolute;left:991.6px;top:763.0px;font:14px/20px 'Liberation Sans', sans-serif;color:#333;white-space:nowrap">text/x-generic</span>
<span style="position:absolute;left:1171.6px;top:763.0px;font:14px/20px 'Liberation Sans', sans-serif;color:#333;white-space:nowrap">0644</span>
<div style="position:absolute;left:336px;top:789px;width:923px;height:30px;background:#f9f9f9"></div>
<div style="position:absolute;left:336px;top:819px;width:923px;height:1px;background:#ddd"></div>
<svg style="position:absolute;left:341.00px;top:793.50px" width="15.00" height="20.00" viewBox="0 0 384 512"><path d="M224 136V0H24C10.700 0 0 10.700 0 24v464c0 13.300 10.700 24 24 24h336c13.300 0 24-10.700 24-24V160H248c-13.200 0-24-10.800-24-24zm64 236c0 6.600-5.400 12-12 12H108c-6.600 0-12-5.400-12-12v-8c0-6.600 5.400-12 12-12h168c6.600 0 12 5.400 12 12v8zm0-64c0 6.600-5.400 12-12 12H108c-6.600 0-12-5.400-12-12v-8c0-6.600 5.400-12 12-12h168c6.600 0 12 5.400 12 12v8zm0-72v8c0 6.600-5.400 12-12 12H108c-6.600 0-12-5.400-12-12v-8c0-6.600 5.400-12 12-12h168c6.600 0 12 5.400 12 12zm96-114.100v6.100H256V0h6.100c6.400 0 12.500 2.500 17 7l97.900 98c4.500 4.500 7 10.600 7 16.900z" fill="#70569b"/></svg>
<span style="position:absolute;left:375px;top:794px;font:14px/20px 'Liberation Sans', sans-serif;color:#333;white-space:nowrap">logout.php</span>
<span style="position:absolute;left:691.6px;top:794.0px;font:14px/20px 'Liberation Sans', sans-serif;color:#333;white-space:nowrap">127 bytes</span>
<span style="position:absolute;left:791.6px;top:794.0px;font:14px/20px 'Liberation Sans', sans-serif;color:#333;white-space:nowrap">Jan 30, 2021, 1:37 PM</span>
<span style="position:absolute;left:991.6px;top:794.0px;font:14px/20px 'Liberation Sans', sans-serif;color:#333;white-space:nowrap">text/x-generic</span>
<span style="position:absolute;left:1171.6px;top:794.0px;font:14px/20px 'Liberation Sans', sans-serif;color:#333;white-space:nowrap">0644</span>
<div style="position:absolute;left:336px;top:820px;width:923px;height:30px;background:#fff"></div>
<div style="position:absolute;left:336px;top:850px;width:923px;height:1px;background:#ddd"></div>
<svg style="position:absolute;left:341.00px;top:824.50px" width="15.00" height="20.00" viewBox="0 0 384 512"><path d="M224 136V0H24C10.700 0 0 10.700 0 24v464c0 13.300 10.700 24 24 24h336c13.300 0 24-10.700 24-24V160H248c-13.200 0-24-10.800-24-24zm64 236c0 6.600-5.400 12-12 12H108c-6.600 0-12-5.400-12-12v-8c0-6.600 5.400-12 12-12h168c6.600 0 12 5.400 12 12v8zm0-64c0 6.600-5.400 12-12 12H108c-6.600 0-12-5.400-12-12v-8c0-6.600 5.400-12 12-12h168c6.600 0 12 5.400 12 12v8zm0-72v8c0 6.600-5.400 12-12 12H108c-6.600 0-12-5.400-12-12v-8c0-6.600 5.400-12 12-12h168c6.600 0 12 5.400 12 12zm96-114.100v6.100H256V0h6.100c6.400 0 12.500 2.500 17 7l97.900 98c4.500 4.500 7 10.600 7 16.900z" fill="#70569b"/></svg>
<span style="position:absolute;left:375px;top:825px;font:14px/20px 'Liberation Sans', sans-serif;color:#333;white-space:nowrap">logout1.php</span>
<span style="position:absolute;left:691.6px;top:825.0px;font:14px/20px 'Liberation Sans', sans-serif;color:#333;white-space:nowrap">132 bytes</span>
<span style="position:absolute;left:791.6px;top:825.0px;font:14px/20px 'Liberation Sans', sans-serif;color:#333;white-space:nowrap">Jan 30, 2021, 1:37 PM</span>
<span style="position:absolute;left:991.6px;top:825.0px;font:14px/20px 'Liberation Sans', sans-serif;color:#333;white-space:nowrap">text/x-generic</span>
<span style="position:absolute;left:1171.6px;top:825.0px;font:14px/20px 'Liberation Sans', sans-serif;color:#333;white-space:nowrap">0644</span>
<div style="position:absolute;left:336px;top:851px;width:923px;height:46px;background:#f9f9f9"></div>
<div style="position:absolute;left:336px;top:897px;width:923px;height:1px;background:#ddd"></div>
<svg style="position:absolute;left:340.8px;top:863.1px" width="16" height="22" viewBox="0 0 16 22"><path d="M2.6 1.2h7.200l4.400 4.400v12.800a1.500 1.500 0 0 1-1.500 1.500h-10.100a1.500 1.500 0 0 1-1.500-1.500v-15.700a1.500 1.500 0 0 1 1.500-1.500z" fill="#fdf9f0" stroke="#573d1f" stroke-width="1.900" stroke-linejoin="round"/><path d="M9.600 1.400v4.500h4.500" fill="#fff" stroke="#573d1f" stroke-width="1.700" stroke-linejoin="round"/><path d="M5.300 3.300h1.400M6.500 4.900h1.400M5.300 6.500h1.400M6.500 8.100h1.400" stroke="#573d1f" stroke-width="1.300"/><path d="M6.500 9.400l1.200 3.900a2 2.200 0 1 1-2.800 0z" fill="#573d1f"/><circle cx="6.300" cy="14.600" r="1" fill="#fff"/></svg>
<span style="position:absolute;left:375px;top:856px;font:14px/18px 'Liberation Sans', sans-serif;color:#333;white-space:nowrap">ONLINE_QUIZ_SYSTEM_IN_PHP_WITH_SOU<br>RCE_CODE (1).zip</span>
<span style="position:absolute;left:691.6px;top:864.0px;font:14px/20px 'Liberation Sans', sans-serif;color:#333;white-space:nowrap">1.01 MB</span>
<span style="position:absolute;left:791.6px;top:864.0px;font:14px/20px 'Liberation Sans', sans-serif;color:#333;white-space:nowrap">Jan 30, 2021, 1:37 PM</span>
<span style="position:absolute;left:991.6px;top:864.0px;font:14px/20px 'Liberation Sans', sans-serif;color:#333;white-space:nowrap">package/x-generic</span>
<span style="position:absolute;left:1171.6px;top:864.0px;font:14px/20px 'Liberation Sans', sans-serif;color:#333;white-space:nowrap">0644</span>
<div style="position:absolute;left:336px;top:898px;width:923px;height:9px;background:#fff"></div>
<div style="position:absolute;left:336px;top:907px;width:923px;height:1px;background:#ddd"></div>
<svg style="position:absolute;left:340.8px;top:902.2px" width="16" height="22" viewBox="0 0 16 22"><path d="M2.6 1.2h7.200l4.400 4.400v12.800a1.500 1.500 0 0 1-1.500 1.500h-10.100a1.500 1.500 0 0 1-1.500-1.500v-15.700a1.500 1.500 0 0 1 1.500-1.500z" fill="#fdf9f0" stroke="#573d1f" stroke-width="1.900" stroke-linejoin="round"/><path d="M9.600 1.400v4.500h4.500" fill="#fff" stroke="#573d1f" stroke-width="1.700" stroke-linejoin="round"/><path d="M5.300 3.300h1.400M6.500 4.900h1.400M5.300 6.500h1.400M6.500 8.100h1.400" stroke="#573d1f" stroke-width="1.300"/><path d="M6.500 9.400l1.200 3.900a2 2.200 0 1 1-2.800 0z" fill="#573d1f"/><circle cx="6.300" cy="14.600" r="1" fill="#fff"/></svg>
<div style="position:absolute;left:1259px;top:200px;width:15px;height:707px;background:#f1f1f1"></div>
<div style="position:absolute;left:1261px;top:214px;width:11px;height:563px;background:#c1c1c1"></div>
<svg style="position:absolute;left:1259px;top:200px" width="15" height="15" viewBox="0 0 15 15"><path d="M3.5 10 L7.5 5.500 L11.5 10z" fill="#a3a3a3"/></svg>
<svg style="position:absolute;left:1259px;top:891px" width="15" height="15" viewBox="0 0 15 15"><path d="M3.5 5.5 L7.5 10 L11.5 5.5z" fill="#505050"/></svg>
<div style="position:absolute;left:336px;top:907px;width:938px;height:14px;background:#f1f1f1"></div>
<div style="position:absolute;left:351px;top:909px;width:885px;height:11px;background:#c1c1c1"></div>
<svg style="position:absolute;left:336px;top:907px" width="15" height="15" viewBox="0 0 15 15"><path d="M10 3.500 L5.500 7.500 L10 11.500z" fill="#a3a3a3"/></svg>
<svg style="position:absolute;left:1244px;top:907px" width="15" height="15" viewBox="0 0 15 15"><path d="M5.500 3.500 L10 7.500 L5.500 11.500z" fill="#505050"/></svg>
<div style="position:absolute;left:1259px;top:907px;width:15px;height:14px;background:#dcdcdc"></div>
<div style="position:absolute;left:399px;top:495px;width:189px;height:274px;background:#fff;box-sizing:border-box;border:1px solid rgba(0,0,0,.12);box-shadow:1px 4px 11px rgba(0,0,0,.4)"></div>
<svg style="position:absolute;left:412.00px;top:507.10px" width="13.80" height="13.80" viewBox="0 0 512 512"><path d="M216 0h80c13.300 0 24 10.700 24 24v168h87.700c17.800 0 26.700 21.500 14.100 34.100L269.700 378.300c-7.500 7.500-19.800 7.500-27.300 0L90.100 226.100c-12.600-12.600-3.700-34.100 14.100-34.100H192V24c0-13.300 10.700-24 24-24zm296 376v112c0 13.300-10.700 24-24 24H24c-13.300 0-24-10.700-24-24V376c0-13.300 10.700-24 24-24h146.700l49 49c20.100 20.100 52.500 20.100 72.600 0l49-49H488c13.300 0 24 10.700 24 24zm-124 88c0-11-9-20-20-20s-20 9-20 20 9 20 20 20 20-9 20-20zm64 0c0-11-9-20-20-20s-20 9-20 20 9 20 20 20 20-9 20-20z" fill="#000"/></svg>
<span style="position:absolute;left:429.40px;top:503.98px;font:14.5px/20px 'Liberation Sans', sans-serif;color:#000;letter-spacing:0.238px;white-space:nowrap;">Download</span>
<svg style="position:absolute;left:412.00px;top:536.11px" width="15.50" height="13.78" viewBox="0 0 576 512"><path d="M572.520 241.400C518.290 135.590 410.930 64 288 64S57.680 135.640 3.480 241.410a32.350 32.350 0 0 0 0 29.190C57.710 376.410 165.070 448 288 448s230.320-71.640 284.520-177.410a32.350 32.350 0 0 0 0-29.190zM288 400a144 144 0 1 1 144-144 143.930 143.930 0 0 1-144 144zm0-240a95.310 95.310 0 0 0-25.310 3.790 47.850 47.850 0 0 1-66.900 66.900A95.780 95.780 0 1 0 288 160z" fill="#000"/></svg>
<span style="position:absolute;left:431.20px;top:532.98px;font:14.5px/20px 'Liberation Sans', sans-serif;color:#000;letter-spacing:-0.043px;white-space:nowrap;">View</span>
<svg style="position:absolute;left:412.00px;top:565.00px" width="14.00" height="14.00" viewBox="0 0 512 512"><path d="M497.900 142.100l-46.100 46.100c-4.700 4.700-12.300 4.700-17 0l-111-111c-4.700-4.700-4.700-12.300 0-17l46.100-46.100c18.700-18.700 49.100-18.700 67.900 0l60.100 60.100c18.800 18.700 18.800 49.100 0 67.900zM284.200 99.800L21.600 362.400.4 483.900c-2.900 16.400 11.400 30.600 27.800 27.800l121.500-21.300 262.600-262.600c4.700-4.700 4.700-12.300 0-17l-111-111c-4.800-4.700-12.400-4.700-17.100 0zM124.100 339.900c-5.500-5.500-5.500-14.300 0-19.800l154-154c5.500-5.500 14.300-5.500 19.800 0s5.500 14.300 0 19.800l-154 154c-5.500 5.500-14.300 5.500-19.800 0zM88 424h48v36.300l-64.500 11.300-31.100-31.100L51.700 376H88v48z" fill="#2f6da6"/></svg>
<span style="position:absolute;left:429.40px;top:561.98px;font:14.5px/20px 'Liberation Sans', sans-serif;color:#2f6da6;letter-spacing:0.100px;white-space:nowrap;">Edit</span>
<svg style="position:absolute;left:412.00px;top:594.10px" width="13.80" height="13.80" viewBox="0 0 512 512"><path d="M352.201 425.775l-79.196 79.196c-9.373 9.373-24.568 9.373-33.941 0l-79.196-79.196c-15.119-15.119-4.411-40.971 16.971-40.970h51.162L228 284H127.196v51.162c0 21.382-25.851 32.090-40.971 16.971L7.029 272.937c-9.373-9.373-9.373-24.569 0-33.941L86.225 159.800c15.119-15.119 40.971-4.411 40.971 16.971V228H228V127.196h-51.230c-21.382 0-32.090-25.851-16.971-40.971l79.196-79.196c9.373-9.373 24.568-9.373 33.941 0l79.196 79.196c15.119 15.119 4.411 40.971-16.971 40.971h-51.162V228h100.804v-51.162c0-21.382 25.851-32.090 40.970-16.971l79.196 79.196c9.373 9.373 9.373 24.569 0 33.941L425.773 352.200c-15.119 15.119-40.971 4.411-40.970-16.971V284H284v100.804h51.230c21.382 0 32.090 25.851 16.971 40.971z" fill="#000"/></svg>
<span style="position:absolute;left:429.70px;top:590.98px;font:14.5px/20px 'Liberation Sans', sans-serif;color:#000;letter-spacing:0.083px;white-space:nowrap;">Move</span>
<svg style="position:absolute;left:411.80px;top:623.14px" width="12.00" height="13.71" viewBox="0 0 448 512"><path d="M433.941 65.941l-51.882-51.882A48 48 0 0 0 348.118 0H176c-26.510 0-48 21.490-48 48v48H48c-26.510 0-48 21.490-48 48v320c0 26.510 21.490 48 48 48h224c26.510 0 48-21.490 48-48v-48h80c26.510 0 48-21.490 48-48V99.882a48 48 0 0 0-14.059-33.941zM266 464H54a6 6 0 0 1-6-6V150a6 6 0 0 1 6-6h74v224c0 26.510 21.490 48 48 48h96v42a6 6 0 0 1-6 6zm128-96H182a6 6 0 0 1-6-6V54a6 6 0 0 1 6-6h106v88c0 13.255 10.745 24 24 24h88v202a6 6 0 0 1-6 6zm6-256h-64V48h9.632c1.591 0 3.117.632 4.243 1.757l48.368 48.368a6 6 0 0 1 1.757 4.243V112z" fill="#000"/></svg>
<span style="position:absolute;left:427.50px;top:619.98px;font:14.5px/20px 'Liberation Sans', sans-serif;color:#000;letter-spacing:0.010px;white-space:nowrap;">Copy</span>
<svg style="position:absolute;left:411.80px;top:652.20px" width="10.20" height="13.60" viewBox="0 0 384 512"><path d="M224 136V0H24C10.700 0 0 10.700 0 24v464c0 13.300 10.700 24 24 24h336c13.300 0 24-10.700 24-24V160H248c-13.200 0-24-10.800-24-24zm160-14.100v6.100H256V0h6.100c6.400 0 12.500 2.500 17 7l97.900 98c4.500 4.500 7 10.600 7 16.900z" fill="#000"/></svg>
<span style="position:absolute;left:426.00px;top:648.98px;font:14.5px/20px 'Liberation Sans', sans-serif;color:#000;letter-spacing:-0.119px;white-space:nowrap;">Rename</span>
<svg style="position:absolute;left:411.80px;top:680.90px" width="14.20" height="14.20" viewBox="0 0 512 512"><path d="M512 176.001C512 273.203 433.202 352 336 352c-11.220 0-22.190-1.062-32.827-3.069l-24.012 27.014A23.999 23.999 0 0 1 261.223 384H224v40c0 13.255-10.745 24-24 24h-40v40c0 13.255-10.745 24-24 24H24c-13.255 0-24-10.745-24-24v-78.059c0-6.365 2.529-12.470 7.029-16.971l161.802-161.802C163.108 213.814 160 195.271 160 176 160 78.798 238.797.001 335.999 0 433.488-.001 512 78.511 512 176.001zM336 128c0 26.510 21.490 48 48 48s48-21.490 48-48-21.490-48-48-48-48 21.490-48 48z" fill="#000"/></svg>
<span style="position:absolute;left:429.40px;top:677.98px;font:14.5px/20px 'Liberation Sans', sans-serif;color:#000;letter-spacing:-0.050px;white-space:nowrap;">Change Permissions</span>
<svg style="position:absolute;left:412.50px;top:708.78px" width="11.30" height="16.44" viewBox="0 0 352 512"><path d="M242.72 256l100.070-100.070c12.280-12.280 12.280-32.190 0-44.480l-22.240-22.240c-12.280-12.280-32.190-12.280-44.480 0L176 189.280 75.930 89.210c-12.280-12.280-32.190-12.280-44.480 0L9.210 111.450c-12.280 12.280-12.280 32.190 0 44.480L109.280 256 9.210 356.070c-12.280 12.280-12.280 32.190 0 44.480l22.240 22.240c12.280 12.280 32.200 12.280 44.480 0L176 322.720l100.070 100.070c12.280 12.280 32.200 12.280 44.480 0l22.240-22.240c12.280-12.280 12.280-32.190 0-44.480L242.720 256z" fill="#000"/></svg>
<span style="position:absolute;left:429.40px;top:706.98px;font:14.5px/20px 'Liberation Sans', sans-serif;color:#000;letter-spacing:0.163px;white-space:nowrap;">Delete</span>
<svg style="position:absolute;left:412.00px;top:739.14px" width="12.00" height="13.71" viewBox="0 0 448 512"><path d="M4.686 427.314L104 328l-32.922-31.029C55.958 281.851 66.666 256 88.048 256h112C213.303 256 224 266.745 224 280v112c0 21.382-25.803 32.090-40.922 16.971L152 376l-99.314 99.314c-6.248 6.248-16.379 6.248-22.627 0L4.686 449.941c-6.248-6.248-6.248-16.379 0-22.627zM443.314 84.686L344 184l32.922 31.029c15.120 15.120 4.412 40.971-16.970 40.971h-112C234.697 256 224 245.255 224 232V120c0-21.382 25.803-32.090 40.922-16.971L296 136l99.314-99.314c6.248-6.248 16.379-6.248 22.627 0l25.373 25.373c6.248 6.248 6.248 16.379 0 22.627z" fill="#000"/></svg>
<span style="position:absolute;left:429.40px;top:735.98px;font:14.5px/20px 'Liberation Sans', sans-serif;color:#000;letter-spacing:-0.035px;white-space:nowrap;">Compress</span>
<div style="position:absolute;left:398px;top:555px;width:189px;height:34px;box-sizing:border-box;border:4px solid #e21219;border-radius:2px"></div>
<svg style="position:absolute;left:0;top:0;pointer-events:none" width="1279" height="921" viewBox="0 0 1279 921" role="img" aria-label="accu web hosting"><title>accu web hosting</title><defs><mask id="cm" maskUnits="userSpaceOnUse" x="0" y="0" width="1279" height="921"><rect x="0" y="0" width="1279" height="921" fill="#fff"/><g fill="#000"><circle cx="554.9" cy="331" r="7.800"/><circle cx="576" cy="331" r="6"/><circle cx="596" cy="331" r="4.300"/><rect x="614.800" y="326.800" width="92" height="8.800" rx="4.400"/><circle cx="554.900" cy="358.600" r="7.800"/><circle cx="576" cy="358.600" r="6"/><circle cx="596" cy="358.600" r="4.300"/><rect x="614.800" y="354.400" width="92" height="8.800" rx="4.400"/></g></mask><filter id="mf" filterUnits="userSpaceOnUse" x="150" y="420" width="980" height="200"><feMorphology operator="erode" radius="7.5 0"/><feMorphology operator="dilate" radius="0 5.5"/></filter><clipPath id="ac"><rect x="708.600" y="150" width="200" height="138"/></clipPath></defs><g opacity="0.125" fill="#1a6bbf" font-family="Liberation Sans, sans-serif"><g mask="url(#cm)"><circle cx="525.500" cy="351.500" r="50"/><circle cx="727.500" cy="349.500" r="51"/><ellipse cx="612.500" cy="322" rx="72" ry="82.500"/><circle cx="697" cy="292" r="25.500"/><rect x="525" y="302" width="203" height="98.800"/></g><g clip-path="url(#ac)" fill="none" stroke="#1a6bbf" stroke-width="7.600"><circle cx="710.500" cy="289.500" r="91.700"/><circle cx="710.500" cy="289.500" r="61.500"/><circle cx="710.500" cy="289.500" r="31.500"/></g><g filter="url(#mf)"><text transform="matrix(1 0 0 2.6741 0 589.39)" y="0" font-size="100"><tspan x="157.07" textLength="254.43" lengthAdjust="spacingAndGlyphs">a</tspan><tspan x="391.84" textLength="266.73" lengthAdjust="spacingAndGlyphs">c</tspan><tspan x="619.44" textLength="271.37" lengthAdjust="spacingAndGlyphs">c</tspan><tspan x="843.95" textLength="295.88" lengthAdjust="spacingAndGlyphs">u</tspan></text></g><text x="186.03 295.51 390.26 500.00 547.89 643.41 735.73 821.12 889.21 949.04 1044.07" y="703.8" font-size="102.8">web hosting</text></g></svg>
</body></html>
